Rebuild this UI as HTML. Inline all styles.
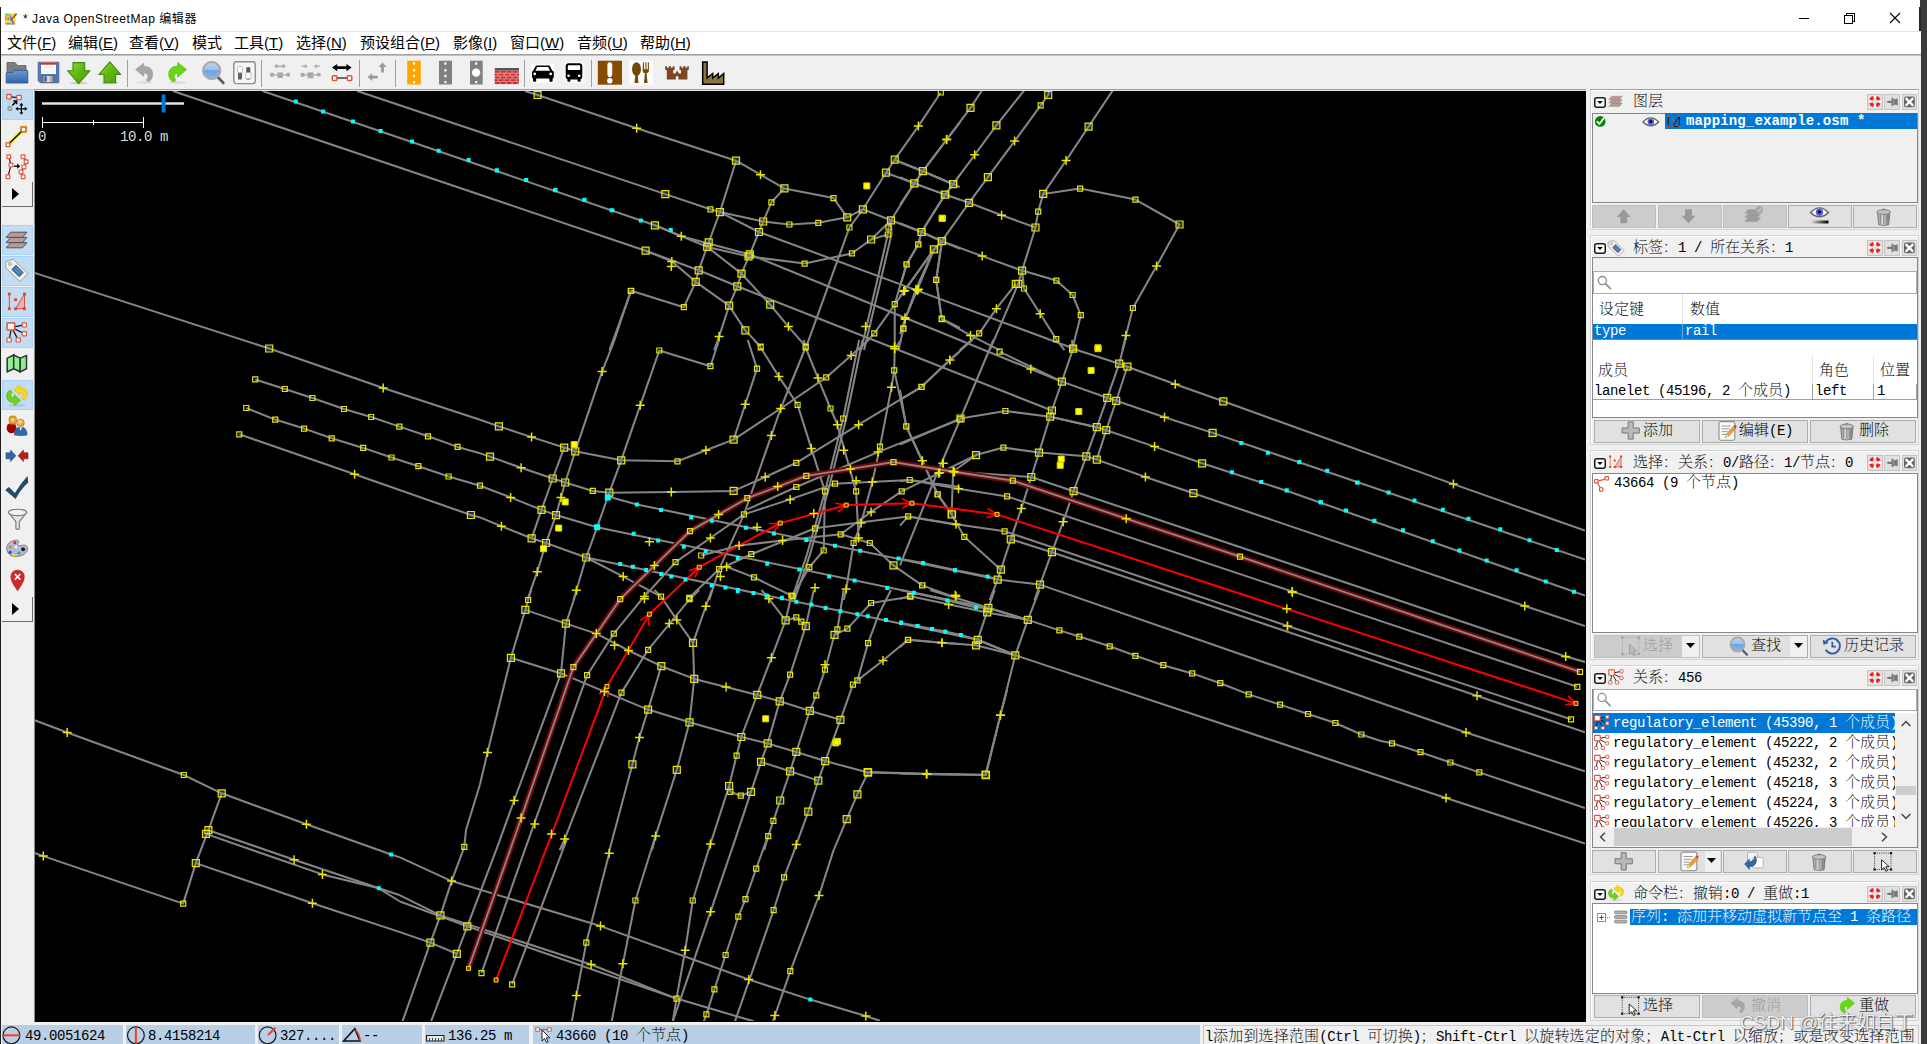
<!DOCTYPE html>
<html lang="zh"><head><meta charset="utf-8"><title>* Java OpenStreetMap 编辑器</title>
<style>
*{box-sizing:border-box;margin:0;padding:0}
html,body{width:1927px;height:1044px;overflow:hidden;background:#f0f0f0}
body{position:relative;font-family:"Liberation Sans","Noto Sans CJK SC",sans-serif;color:#000}
div,svg{position:absolute}
.t{white-space:nowrap}
.ui{font-family:"Liberation Sans","Noto Sans CJK SC",sans-serif}
.sw{font-family:"Liberation Mono","Noto Serif CJK SC",serif;font-size:15px;color:#000;font-weight:200}
.sw .a{font-family:"Liberation Mono",monospace;font-size:14px;letter-spacing:-0.4px}
.b .a{letter-spacing:0.15px}
.b,.b .a{font-weight:bold}
.btn{background:#e1e1e1;border:1px solid #adadad}
.btnd{background:#cccccc;border:1px solid #bfbfbf}
.lb{background:#fff;border:1px solid #828790}
.sel{background:#0078d7;color:#fff}
.sel .sw,.sel.sw{color:#fff}
.sf{background:#b8cfe5}
.tb{background:#f0f0f0;border:1px solid #adadad}
.lsel{background:#c2dcf3;border:1px solid #a8d2f7}
</style></head>
<body>
<div style="left:0px;top:0px;width:1921px;height:31px;background:#fff"></div>
<div style="left:0px;top:31px;width:1919px;height:1px;background:#e6e6e6"></div>
<div style="left:0px;top:32px;width:1921px;height:22px;background:#fff"></div>
<div style="left:0px;top:54px;width:1921px;height:1px;background:#a0a0a0"></div>
<div style="left:0px;top:55px;width:1921px;height:1px;background:#c2c2c2"></div>
<div style="left:0px;top:7px;width:1px;height:1037px;background:#1e1e1e"></div>
<div style="left:1921px;top:0px;width:6px;height:1044px;background:#3b3b3b"></div>
<div style="left:1920px;top:0px;width:1px;height:7px;background:#3b3b3b"></div>
<div style="left:1919px;top:7px;width:2px;height:24px;background:#262626"></div>
<div class="t ui" style="left:23px;top:9px;height:20px;line-height:20px;font-size:12px;letter-spacing:0.55px">* Java OpenStreetMap 编辑器</div>
<svg style="left:1790px;top:5px" width="120" height="26" viewBox="0 0 120 26"><g stroke="#000" stroke-width="1" fill="none" shape-rendering="crispEdges"><path d="M9 13.5H19"/><path d="M54.5 10.5h8v8h-8z"/><path d="M56.5 10.5v-2h8v8h-2"/></g><path d="M100 8L110 18M110 8L100 18" stroke="#000" stroke-width="1.1" fill="none"/></svg>
<div class="t ui" style="left:7px;top:32px;height:22px;line-height:22px;font-size:15px">文件(<u>F</u>)</div>
<div class="t ui" style="left:68px;top:32px;height:22px;line-height:22px;font-size:15px">编辑(<u>E</u>)</div>
<div class="t ui" style="left:129px;top:32px;height:22px;line-height:22px;font-size:15px">查看(<u>V</u>)</div>
<div class="t ui" style="left:192px;top:32px;height:22px;line-height:22px;font-size:15px">模式</div>
<div class="t ui" style="left:234px;top:32px;height:22px;line-height:22px;font-size:15px">工具(<u>T</u>)</div>
<div class="t ui" style="left:296px;top:32px;height:22px;line-height:22px;font-size:15px">选择(<u>N</u>)</div>
<div class="t ui" style="left:360px;top:32px;height:22px;line-height:22px;font-size:15px">预设组合(<u>P</u>)</div>
<div class="t ui" style="left:453px;top:32px;height:22px;line-height:22px;font-size:15px">影像(<u>I</u>)</div>
<div class="t ui" style="left:510px;top:32px;height:22px;line-height:22px;font-size:15px">窗口(<u>W</u>)</div>
<div class="t ui" style="left:577px;top:32px;height:22px;line-height:22px;font-size:15px">音频(<u>U</u>)</div>
<div class="t ui" style="left:640px;top:32px;height:22px;line-height:22px;font-size:15px">帮助(<u>H</u>)</div>
<div style="left:127px;top:60px;width:1px;height:27px;background:#a0a0a0"></div>
<div style="left:261px;top:60px;width:1px;height:27px;background:#a0a0a0"></div>
<div style="left:359px;top:60px;width:1px;height:27px;background:#a0a0a0"></div>
<div style="left:395px;top:60px;width:1px;height:27px;background:#a0a0a0"></div>
<div style="left:524px;top:60px;width:1px;height:27px;background:#a0a0a0"></div>
<div style="left:591px;top:60px;width:1px;height:27px;background:#a0a0a0"></div>
<div class="lsel" style="left:2px;top:89px;width:31px;height:31px;"></div>
<div class="lsel" style="left:2px;top:225px;width:31px;height:30px;"></div>
<div class="lsel" style="left:2px;top:256px;width:31px;height:30px;"></div>
<div class="lsel" style="left:2px;top:287px;width:31px;height:30px;"></div>
<div class="lsel" style="left:2px;top:318px;width:31px;height:30px;"></div>
<div class="lsel" style="left:2px;top:380px;width:31px;height:30px;"></div>
<div style="left:2px;top:182px;width:31px;height:25px;border-right:1px solid #696969;border-bottom:1px solid #696969;background:#f0f0f0"></div>
<svg style="left:11px;top:188px" width="10" height="12"><path d="M1 0L8 6L1 12z" fill="#000"/></svg>
<div style="left:2px;top:597px;width:31px;height:25px;border-right:1px solid #696969;border-bottom:1px solid #696969;background:#f0f0f0"></div>
<svg style="left:11px;top:603px" width="10" height="12"><path d="M1 0L8 6L1 12z" fill="#000"/></svg>
<div style="left:34px;top:89px;width:1552px;height:1px;background:#a0a0a0"></div>
<div style="left:34px;top:89px;width:1px;height:933px;background:#8c8c8c"></div>
<div style="left:35px;top:90px;width:1551px;height:1px;background:#e3e3e3"></div>
<div style="left:35px;top:91px;width:1551px;height:931px;background:#000"></div>
<div class="sf" style="left:2px;top:1025px;width:121px;height:20px;"></div>
<div class="sf" style="left:126px;top:1025px;width:129px;height:20px;"></div>
<div class="sf" style="left:258px;top:1025px;width:81px;height:20px;"></div>
<div class="sf" style="left:342px;top:1025px;width:80px;height:20px;"></div>
<div class="sf" style="left:425px;top:1025px;width:104px;height:20px;"></div>
<div class="sf" style="left:533px;top:1025px;width:667px;height:20px;"></div>
<div class="sf" style="left:1203px;top:1025px;width:716px;height:20px;"></div>
<div style="left:1203px;top:1025px;width:716px;height:20px;background:#f0f0f0;border:1px solid #c8c8c8"></div>
<div class="t sw" style="left:25px;top:1026px;height:20px;line-height:20px;"><span class="a">49.0051624</span></div>
<div class="t sw" style="left:148px;top:1026px;height:20px;line-height:20px;"><span class="a">8.4158214</span></div>
<div class="t sw" style="left:280px;top:1026px;height:20px;line-height:20px;"><span class="a">327....</span></div>
<div class="t sw" style="left:363px;top:1026px;height:20px;line-height:20px;"><span class="a">--</span></div>
<div class="t sw" style="left:448px;top:1026px;height:20px;line-height:20px;"><span class="a">136.25&nbsp;m</span></div>
<div class="t sw" style="left:556px;top:1026px;height:20px;line-height:20px;"><span class="a">43660&nbsp;(10&nbsp;</span>个节点<span class="a">)</span></div>
<div class="t sw" style="left:1205px;top:1027px;height:20px;line-height:20px;letter-spacing:0.18px"><span class="a">l</span>添加到选择范围<span class="a">(Ctrl&nbsp;</span>可切换<span class="a">)</span>；<span class="a">Shift-Ctrl&nbsp;</span>以旋转选定的对象；<span class="a">Alt-Ctrl&nbsp;</span>以缩放；或是改变选择范围</div>
<div style="left:1590px;top:89px;width:329px;height:141px;border:1px solid #d5d5d5;border-top-color:#a0a0a0;box-shadow:inset 1px 1px 0 #fff"></div>
<svg style="left:1594px;top:97px" width="12" height="11"><rect x="0.75" y="0.75" width="10.5" height="9.5" rx="2" fill="#fff" stroke="#1a1a1a" stroke-width="1.5"/><path d="M3.2 4L8.8 4L6 7z" fill="#000"/></svg>
<div class="t sw" style="left:1633px;top:93px;height:20px;line-height:20px;">图层</div>
<div style="left:1867.4px;top:94.2px;width:15.5px;height:15.6px;background:#e1e1e1;border:1px solid #c4c4c4"></div>
<div style="left:1884.3px;top:94.2px;width:15.5px;height:15.6px;background:#e1e1e1;border:1px solid #c4c4c4"></div>
<div style="left:1901.6px;top:94.2px;width:15.5px;height:15.6px;background:#e1e1e1;border:1px solid #c4c4c4"></div>
<div style="left:1590px;top:235px;width:329px;height:210px;border:1px solid #d5d5d5;border-top-color:#d5d5d5;box-shadow:inset 1px 1px 0 #fff"></div>
<svg style="left:1594px;top:243px" width="12" height="11"><rect x="0.75" y="0.75" width="10.5" height="9.5" rx="2" fill="#fff" stroke="#1a1a1a" stroke-width="1.5"/><path d="M3.2 4L8.8 4L6 7z" fill="#000"/></svg>
<div class="t sw" style="left:1633px;top:238px;height:20px;line-height:20px;">标签：<span class="a">1&nbsp;/&nbsp;</span>所在关系：<span class="a">1</span></div>
<div style="left:1867.4px;top:240.2px;width:15.5px;height:15.6px;background:#e1e1e1;border:1px solid #c4c4c4"></div>
<div style="left:1884.3px;top:240.2px;width:15.5px;height:15.6px;background:#e1e1e1;border:1px solid #c4c4c4"></div>
<div style="left:1901.6px;top:240.2px;width:15.5px;height:15.6px;background:#e1e1e1;border:1px solid #c4c4c4"></div>
<div style="left:1590px;top:450px;width:329px;height:210px;border:1px solid #d5d5d5;border-top-color:#d5d5d5;box-shadow:inset 1px 1px 0 #fff"></div>
<svg style="left:1594px;top:458px" width="12" height="11"><rect x="0.75" y="0.75" width="10.5" height="9.5" rx="2" fill="#fff" stroke="#1a1a1a" stroke-width="1.5"/><path d="M3.2 4L8.8 4L6 7z" fill="#000"/></svg>
<div class="t sw" style="left:1633px;top:453px;height:20px;line-height:20px;">选择：关系：<span class="a">0/</span>路径：<span class="a">1/</span>节点：<span class="a">0</span></div>
<div style="left:1867.4px;top:455.2px;width:15.5px;height:15.6px;background:#e1e1e1;border:1px solid #c4c4c4"></div>
<div style="left:1884.3px;top:455.2px;width:15.5px;height:15.6px;background:#e1e1e1;border:1px solid #c4c4c4"></div>
<div style="left:1901.6px;top:455.2px;width:15.5px;height:15.6px;background:#e1e1e1;border:1px solid #c4c4c4"></div>
<div style="left:1590px;top:665px;width:329px;height:210px;border:1px solid #d5d5d5;border-top-color:#d5d5d5;box-shadow:inset 1px 1px 0 #fff"></div>
<svg style="left:1594px;top:673px" width="12" height="11"><rect x="0.75" y="0.75" width="10.5" height="9.5" rx="2" fill="#fff" stroke="#1a1a1a" stroke-width="1.5"/><path d="M3.2 4L8.8 4L6 7z" fill="#000"/></svg>
<div class="t sw" style="left:1633px;top:668px;height:20px;line-height:20px;">关系：<span class="a">456</span></div>
<div style="left:1867.4px;top:670.2px;width:15.5px;height:15.6px;background:#e1e1e1;border:1px solid #c4c4c4"></div>
<div style="left:1884.3px;top:670.2px;width:15.5px;height:15.6px;background:#e1e1e1;border:1px solid #c4c4c4"></div>
<div style="left:1901.6px;top:670.2px;width:15.5px;height:15.6px;background:#e1e1e1;border:1px solid #c4c4c4"></div>
<div style="left:1590px;top:881px;width:329px;height:140px;border:1px solid #d5d5d5;border-top-color:#d5d5d5;box-shadow:inset 1px 1px 0 #fff"></div>
<svg style="left:1594px;top:889px" width="12" height="11"><rect x="0.75" y="0.75" width="10.5" height="9.5" rx="2" fill="#fff" stroke="#1a1a1a" stroke-width="1.5"/><path d="M3.2 4L8.8 4L6 7z" fill="#000"/></svg>
<div class="t sw" style="left:1633px;top:884px;height:20px;line-height:20px;">命令栏：撤销<span class="a">:0&nbsp;/&nbsp;</span>重做<span class="a">:1</span></div>
<div style="left:1867.4px;top:886.2px;width:15.5px;height:15.6px;background:#e1e1e1;border:1px solid #c4c4c4"></div>
<div style="left:1884.3px;top:886.2px;width:15.5px;height:15.6px;background:#e1e1e1;border:1px solid #c4c4c4"></div>
<div style="left:1901.6px;top:886.2px;width:15.5px;height:15.6px;background:#e1e1e1;border:1px solid #c4c4c4"></div>
<div style="left:1592px;top:113px;width:326px;height:90px;background:#f0f0f0;border:1px solid #828790"></div>
<div class="sel" style="left:1665px;top:113px;width:252px;height:16px;"></div>
<div class="t sw b" style="left:1686px;top:111px;height:20px;line-height:20px;color:#fff"><span class="a">mapping_example.osm&nbsp;*</span></div>
<div class="btnd" style="left:1592px;top:205px;width:64px;height:23px;"></div>
<div class="btnd" style="left:1658px;top:205px;width:64px;height:23px;"></div>
<div class="btnd" style="left:1723px;top:205px;width:64px;height:23px;"></div>
<div class="btn" style="left:1788px;top:205px;width:64px;height:23px;"></div>
<div class="btn" style="left:1853px;top:205px;width:64px;height:23px;"></div>
<div style="left:1592px;top:257px;width:326px;height:161px;background:#fff;border:1px solid #828790"></div>
<div style="left:1593px;top:258px;width:324px;height:13px;background:#f0f0f0"></div>
<div style="left:1593px;top:271px;width:324px;height:23px;background:#fff;border:1px solid #abadb3"></div>
<div style="left:1593px;top:294px;width:324px;height:30px;background:#fff"></div>
<div style="left:1682px;top:294px;width:1px;height:30px;background:#e5e5e5"></div>
<div class="t sw" style="left:1599px;top:300px;height:22px;line-height:22px;">设定键</div>
<div class="t sw" style="left:1690px;top:300px;height:22px;line-height:22px;">数值</div>
<div class="sel" style="left:1593px;top:324px;width:324px;height:15px;"></div>
<div style="left:1682px;top:324px;width:1px;height:15px;background:#5aa7e6"></div>
<div style="left:1593px;top:339px;width:324px;height:1px;background:#858585"></div>
<div class="t sw" style="left:1594px;top:321px;height:20px;line-height:20px;color:#fff"><span class="a">type</span></div>
<div class="t sw" style="left:1685px;top:321px;height:20px;line-height:20px;color:#fff"><span class="a">rail</span></div>
<div style="left:1812px;top:356px;width:1px;height:28px;background:#e5e5e5"></div>
<div style="left:1873px;top:356px;width:1px;height:28px;background:#e5e5e5"></div>
<div class="t sw" style="left:1598px;top:361px;height:22px;line-height:22px;">成员</div>
<div class="t sw" style="left:1819px;top:361px;height:22px;line-height:22px;">角色</div>
<div class="t sw" style="left:1880px;top:361px;height:22px;line-height:22px;">位置</div>
<div style="left:1593px;top:399px;width:324px;height:1px;background:#a0a0a0"></div>
<div style="left:1812px;top:384px;width:1px;height:16px;background:#a0a0a0"></div>
<div style="left:1873px;top:384px;width:1px;height:16px;background:#a0a0a0"></div>
<div style="left:1916px;top:384px;width:1px;height:16px;background:#a0a0a0"></div>
<div class="t sw" style="left:1594px;top:381px;height:20px;line-height:20px;"><span class="a">lanelet&nbsp;(45196,&nbsp;2&nbsp;</span>个成员<span class="a">)</span></div>
<div class="t sw" style="left:1815px;top:381px;height:20px;line-height:20px;"><span class="a">left</span></div>
<div class="t sw" style="left:1877px;top:381px;height:20px;line-height:20px;"><span class="a">1</span></div>
<div class="btn" style="left:1594px;top:420px;width:106px;height:23px;"></div>
<div class="t sw" style="left:1643px;top:421px;height:21px;line-height:21px;">添加</div>
<div class="btn" style="left:1702px;top:420px;width:106px;height:23px;"></div>
<div class="t sw" style="left:1739px;top:421px;height:21px;line-height:21px;">编辑<span class="a">(E)</span></div>
<div class="btn" style="left:1810px;top:420px;width:106px;height:23px;"></div>
<div class="t sw" style="left:1859px;top:421px;height:21px;line-height:21px;">删除</div>
<div style="left:1592px;top:473px;width:326px;height:160px;background:#fff;border:1px solid #828790"></div>
<div class="t sw" style="left:1614px;top:473px;height:20px;line-height:20px;"><span class="a">43664&nbsp;(9&nbsp;</span>个节点<span class="a">)</span></div>
<div class="btnd" style="left:1594px;top:635px;width:106px;height:23px;"></div>
<div style="left:1682px;top:636px;width:17px;height:21px;background:#f0f0f0"></div>
<div class="btn" style="left:1702px;top:635px;width:106px;height:23px;"></div>
<div style="left:1790px;top:636px;width:17px;height:21px;background:#f0f0f0"></div>
<div class="btn" style="left:1810px;top:635px;width:106px;height:23px;"></div>
<div class="t sw" style="left:1643px;top:636px;height:21px;line-height:21px;color:#9a9a9a">选择</div>
<div class="t sw" style="left:1751px;top:636px;height:21px;line-height:21px;">查找</div>
<div class="t sw" style="left:1844px;top:636px;height:21px;line-height:21px;">历史记录</div>
<svg style="left:1686px;top:643px" width="9" height="6"><path d="M0 0H9L4.5 5z" fill="#000"/></svg>
<svg style="left:1794px;top:643px" width="9" height="6"><path d="M0 0H9L4.5 5z" fill="#000"/></svg>
<div style="left:1592px;top:689px;width:326px;height:159px;background:#fff;border:1px solid #828790"></div>
<div style="left:1593px;top:689px;width:324px;height:22px;background:#fff;border:1px solid #abadb3"></div>
<div class="sel" style="left:1593px;top:713px;width:302px;height:20px;"></div>
<div style="left:1593px;top:713px;width:302px;height:114px;overflow:hidden">
<div class="t sw" style="left:20px;top:0px;height:20px;line-height:20px;color:#fff;"><span class="a">regulatory_element&nbsp;(45390,&nbsp;1&nbsp;</span>个成员<span class="a">)</span></div>
<div class="t sw" style="left:20px;top:20px;height:20px;line-height:20px;"><span class="a">regulatory_element&nbsp;(45222,&nbsp;2&nbsp;</span>个成员<span class="a">)</span></div>
<div class="t sw" style="left:20px;top:40px;height:20px;line-height:20px;"><span class="a">regulatory_element&nbsp;(45232,&nbsp;2&nbsp;</span>个成员<span class="a">)</span></div>
<div class="t sw" style="left:20px;top:60px;height:20px;line-height:20px;"><span class="a">regulatory_element&nbsp;(45218,&nbsp;3&nbsp;</span>个成员<span class="a">)</span></div>
<div class="t sw" style="left:20px;top:80px;height:20px;line-height:20px;"><span class="a">regulatory_element&nbsp;(45224,&nbsp;3&nbsp;</span>个成员<span class="a">)</span></div>
<div class="t sw" style="left:20px;top:100px;height:20px;line-height:20px;"><span class="a">regulatory_element&nbsp;(45226,&nbsp;3&nbsp;</span>个成员<span class="a">)</span></div>
</div>
<div style="left:1895px;top:713px;width:22px;height:114px;background:#f0f0f0"></div>
<div style="left:1896px;top:786px;width:20px;height:9px;background:#cdcdcd"></div>
<svg style="left:1901px;top:720px" width="10" height="7"><path d="M0.7 6L5 1.5L9.3 6" fill="none" stroke="#404040" stroke-width="1.4"/></svg>
<svg style="left:1901px;top:813px" width="10" height="7"><path d="M0.7 1L5 5.5L9.3 1" fill="none" stroke="#404040" stroke-width="1.4"/></svg>
<div style="left:1593px;top:827px;width:324px;height:20px;background:#f0f0f0"></div>
<div style="left:1614px;top:828px;width:238px;height:18px;background:#cdcdcd"></div>
<svg style="left:1599px;top:832px" width="7" height="10"><path d="M6 0.7L1.5 5L6 9.3" fill="none" stroke="#404040" stroke-width="1.4"/></svg>
<svg style="left:1881px;top:832px" width="7" height="10"><path d="M1 0.7L5.5 5L1 9.3" fill="none" stroke="#404040" stroke-width="1.4"/></svg>
<div class="btn" style="left:1592px;top:850px;width:64px;height:23px;"></div>
<div class="btn" style="left:1658px;top:850px;width:64px;height:23px;"></div>
<div class="btn" style="left:1723px;top:850px;width:64px;height:23px;"></div>
<div class="btn" style="left:1788px;top:850px;width:64px;height:23px;"></div>
<div class="btn" style="left:1853px;top:850px;width:64px;height:23px;"></div>
<div style="left:1705px;top:851px;width:15px;height:21px;background:#f0f0f0"></div>
<svg style="left:1707px;top:858px" width="9" height="6"><path d="M0 0H9L4.5 5z" fill="#000"/></svg>
<div style="left:1592px;top:903px;width:326px;height:91px;background:#fff;border:1px solid #828790"></div>
<div class="sel" style="left:1630px;top:909px;width:287px;height:16px;"></div>
<div class="t sw" style="left:1631px;top:907px;height:20px;line-height:20px;color:#fff">序列<span class="a">:&nbsp;</span>添加并移动虚拟新节点至<span class="a">&nbsp;1&nbsp;</span>条路径</div>
<div class="btn" style="left:1594px;top:995px;width:106px;height:23px;"></div>
<div class="t sw" style="left:1643px;top:996px;height:21px;line-height:21px;">选择</div>
<div class="btnd" style="left:1702px;top:995px;width:106px;height:23px;"></div>
<div class="t sw" style="left:1751px;top:996px;height:21px;line-height:21px;color:#9a9a9a">撤消</div>
<div class="btn" style="left:1810px;top:995px;width:106px;height:23px;"></div>
<div class="t sw" style="left:1859px;top:996px;height:21px;line-height:21px;">重做</div>
<svg style="left:35px;top:91px" width="1550" height="930" viewBox="35 91 1550 930">
<g fill="none" stroke="#858585" stroke-width="2.05" stroke-linejoin="round">
<path d="M172.9 91L645.6 250.7"/>
<path d="M262.6 91L654.9 225.3"/>
<path d="M357.2 91L665.3 194.1"/>
<path d="M525 91L537.6 95L636.7 128.2L736 160.7"/>
<path d="M34 272.7L269.2 348.5L383.2 388L480 419.7"/>
<path d="M255.2 379.4L284.8 389L312.4 398L344 409L371.2 417L399.4 426.6L428 436.3L457.6 446.9L480 453.3"/>
<path d="M246.3 408L275.2 419.6L304.1 428.6L331.7 438.3L363.2 447.9L391.5 457.5L418.4 466.2L448.6 476.5L480 485.7"/>
<path d="M239.3 434.3L354.6 474.2L470.9 515L480 517.4"/>
<path d="M630.7 291L614.5 340"/>
<path d="M34 719.9L67.2 732.5L183.8 775L221.7 793.3L306.4 824.2L391.1 854.5L400 857.4"/>
<path d="M221.7 793.3L208.4 830.2L195.8 863.1L183.2 903.6L43.3 856.1L34 852.8"/>
<path d="M208.4 830.2L294.1 859.8L400 895.3"/>
<path d="M206 833.9L322.4 874.4L378.8 888.3L400 901.5"/>
<path d="M195.8 863.1L312.4 903.3L400 932.1"/>
<path d="M1223.3 401.3L1453.4 484.1L1585 530.6"/>
<path d="M1212.6 432.9L1585 559.5"/>
<path d="M1202.2 463.3L1286.6 490.8L1585 595.6"/>
<path d="M1193.4 493.2L1524.8 606L1585 626"/>
<path d="M1073.6 491.2L1565.7 656.5L1585 661.9"/>
<path d="M1007.1 496.4L1292 591.4L1577.3 686.8"/>
<path d="M1004.6 531.3L1287.6 626L1571 719.3"/>
<path d="M1051.9 552.2L1585 732.3"/>
<path d="M1040 584.6L1466 732.5L1585 771.4"/>
<path d="M1015.3 655.3L1446 798L1585 843.5"/>
<path d="M736.1 160.7L760.5 174.7L784.4 188.4L833.5 198.1L847.2 217.3L862.9 209.3"/>
<path d="M736.1 160.7L719.9 212.1L708.7 242.4L698.7 270.3L695.7 281.8L683.8 307.2L631.2 290.8L609.5 350.1"/>
<path d="M665.3 194.1L710.4 209.3L719.9 212.1L763.2 221.5L789.4 224.5L818.3 222.8L847.2 217.3"/>
<path d="M719.9 212.1L759 232"/>
<path d="M759 232L917.4 290.6L1072.9 348.2"/>
<path d="M654.9 225.3L707.2 246.9L748.5 256.4L804.6 263.6L851.9 253.4L871.1 239.5L891 220.3"/>
<path d="M654.9 225.3L681.3 236.2L749.8 254.4"/>
<path d="M749.8 254.4L905 317.7L1030.8 369L1062 381.7"/>
<path d="M645.6 250.7L698.7 270.3L737.3 286.3"/>
<path d="M737.3 286.3L1051.9 410.5"/>
<path d="M645.6 250.7L671.8 261.4L695.7 281.8"/>
<path d="M695.7 281.8L729.1 305.7L745.3 330.4L760.7 346.6"/>
<path d="M707.2 246.9L741.5 273.6L770.2 304.7L788.4 326.6L805.8 346.6"/>
<path d="M784.4 188.4L771.4 202.3L763.2 221.5L759 232L749.8 254.4L741.5 273.6L737.3 286.3L729.1 305.7L719.1 336.6L714.1 350.1"/>
<path d="M940.8 92.5L918.4 126.1L894.7 159.7L886 172.7L862.9 209.3L849.4 227.5L806.3 346.6"/>
<path d="M960 122.4L946.5 139.8L922.9 171.2L914.2 183.4L891 220.3L888.5 227.5L887.8 234.5L861.1 350.1"/>
<path d="M960 174.7L953.3 184.2L945.3 194.6L921.4 232L918.4 244.4L906.4 264.4L894.7 304.2L894.7 346.6"/>
<path d="M894.7 159.7L922.9 171.2L953.3 184.2L960 187.1"/>
<path d="M886 172.7L914.2 183.4L945.3 194.6L960 199.6"/>
<path d="M862.9 209.3L891 220.3L921.4 232L942.1 241.2L960 248.7"/>
<path d="M942.1 241.2L933.8 249.4L904.7 290.5L874.3 333.4L858.6 350.1"/>
<path d="M942.1 241.2L936.3 279.8L941.6 318.7L960 327.9"/>
<path d="M933.8 249.4L915.9 289.3L905.2 319.2L903.5 328.6L898.5 350.1"/>
<path d="M871.1 239.5L887.8 234.5"/>
<path d="M891 220.3L891.5 234.5L864.1 350.1"/>
<path d="M982.2 90L970.5 107.9L946.8 139.3L922.9 171.2L914.4 183.4L900 204.6"/>
<path d="M1024.5 90L996.4 125.4L974.7 154.8L953.1 184.2L944.8 194.6L921.7 232L918.2 244.4L906.7 264.4L900 286.8"/>
<path d="M1049.5 90L1048.2 95L1040.7 105.4L1014.6 141.1L987.9 177.2L969 202.8L941.8 241.2L934.1 249.4L900 296.7"/>
<path d="M1113 90L1088.6 126.6L1066.1 160.5L1043.2 193.9L1038.2 211.6L1035.5 227.5L1022.1 270.6L1024 288.5L1040.2 313.7L1056.2 339.1L1064.4 350.1"/>
<path d="M1043.2 193.9L1080.1 188.6L1135.4 199.6L1179.5 224.5L1156.6 266.1L1132.9 308L1125.9 335.4L1122.4 350.1"/>
<path d="M900 162.2L922.9 171.2L953.1 184.2"/>
<path d="M900 177.2L914.4 183.4L944.8 194.6L969 202.8L1001.6 215.3L1035.5 227.5"/>
<path d="M900 223.3L921.7 232L941.8 241.2L982.2 256.1L1022.1 270.6L1056.4 280.6L1072.6 295L1080.8 315.2L1072.6 347.8"/>
<path d="M1015.8 283.8L996.4 308.7L979.2 333.4L959.8 350.1"/>
<path d="M1022.1 270.6L1018.3 283.8L989.7 350.1"/>
<path d="M941.8 241.2L936.1 279.8L941.8 319.2L970.5 335.4L999.6 350.1"/>
<path d="M934.1 249.4L905 319.2L900 334.1"/>
<path d="M480 419.7L498.9 426.4L531.6 437.1L564.2 447.6L575.2 451.3L621.2 460.3L677.5 461.3L705.9 450.3L733.6 439.6L780.7 408.5L826.2 377.4L851.1 355.4L868.6 340"/>
<path d="M480 453.3L490 456.6L521.1 467.8L552.7 478.5L565.2 482.5L592.8 490.9L609.3 492.7L671.3 491.9L733.6 490.9L765.2 477L796.3 462.8L858.6 424.7L921.4 386.8L950 359.9L960 351.2"/>
<path d="M480 485.7L510.6 497.4L541.5 509.9L556 515.1L597.1 527.3"/>
<path d="M597.1 527.3L988.4 607.9L1027.8 619.9"/>
<path d="M480 517.4L501.4 526.3L531.6 538.3L546 543L586.1 557.5"/>
<path d="M586.1 557.5L977.7 639.8L1015.3 655.3"/>
<path d="M586.1 557.5L623.2 576.6L661.1 596.6"/>
<path d="M609.3 492.7L607.8 497.4"/>
<path d="M608 496.5L636.9 504.4L997.6 579.6"/>
<path d="M564.2 447.6L552.7 478.5L541.5 509.9L531.6 538.3"/>
<path d="M614.5 340L602.1 371.6L575.2 451.3L565.2 482.5L556 515.1L546 543L537.3 571.7L527.3 600.1"/>
<path d="M573.4 600.1L576.4 590.3L586.1 557.5L597.1 527.3L609.3 492.7L621.2 460.3L640.2 405.3L659.3 350.5L710.4 366.2L719.1 340"/>
<path d="M747.8 340L757 368.6L745.3 404.3L733.6 439.6"/>
<path d="M754 340L760.7 347.5L778.9 376.6L797.6 404.8L811.3 448.4L825 491.4L823.7 550.5L809.3 567.2L792.6 596.1"/>
<path d="M803.8 340L805.6 347.5L818 378.1L830.5 408.5L837.4 424.7L856.1 491.4L858.6 538L853.6 543L846.2 589.1L843.7 600.1"/>
<path d="M805.6 347.5L780.7 408.5L771.4 435.4L744 514.4L719.1 569.2L709.2 600.1"/>
<path d="M859.1 340L843.2 418.5L825 491.4L806.3 556.7L791.4 600.1"/>
<path d="M862.6 340L846.2 418.5L828 491.4L809.3 556.7L794.4 600.1"/>
<path d="M901 340L894.7 348.7L894.2 370.4L891.5 387.3L880 446.6L872.3 482L861.1 523.1L853.6 543"/>
<path d="M894.2 370.4L906.4 426.4L922.1 460.8L937.8 494.4L952 514.4"/>
<path d="M644.4 596.6L675.5 562.2L710.4 538L744 514.4L790.1 499.4L835 483.7L909.7 480L960 487"/>
<path d="M689.2 597.8L719.1 569.2L751.3 554.2L815 528.3L861.6 522.3L908.2 516.4L960 525.6"/>
<path d="M782.6 540.5L840.7 534.3L869.8 543L893.5 565.4L922.1 585.4L960 599.1"/>
<path d="M726.6 566.7L754 577.4L792.6 596.1"/>
<path d="M701.2 555.5L739.1 545.5L782.6 540.5"/>
<path d="M960 419.2L878 452.1L796.3 487L747.3 509.4"/>
<path d="M840.7 534.3L871 511.9L901.7 491.3L976.3 455"/>
<path d="M1073.1 348.7L1119.2 363.7L1127.4 366.7L1175.2 384.3L1223.3 401.3"/>
<path d="M1061.9 381.6L1107.2 397.8L1116.2 400.8L1164.5 417.2L1212.6 432.9"/>
<path d="M1051.9 410.5L1050.2 416.7L1096.8 427.2L1106.2 430.2L1154.6 446.6L1202.1 463.3"/>
<path d="M976 455.1L1003.4 447.6L1039 452.6L1086.3 456.3L1096.8 459.6L1145.4 477L1193.4 493.2"/>
<path d="M952.3 471.5L1031.3 477L1073.6 491.2"/>
<path d="M900 481.2L909.5 480L958.5 488.7L1007.1 496.4"/>
<path d="M900 525.6L908.2 516.4L956 524.3L1004.6 531.3"/>
<path d="M1010.8 539.3L1051.9 552.2"/>
<path d="M900 558.7L923.2 562.9L955 569.9L987.7 576.6L997.6 579.6L1040 584.6"/>
<path d="M993.4 340L960.5 418.5L932.4 484.5L900 565.4"/>
<path d="M1071.9 340L1073.1 348.7L1061.9 381.6L1051.9 410.5L1039 452.6L1031.3 477L1021.3 508.6L1010.8 539.3L1000.9 569.7L997.6 579.6L989.7 600.1"/>
<path d="M1125.4 340L1119.2 363.7L1107.2 397.8L1096.8 427.2L1086.3 456.3L1073.6 491.2L1063.2 521.8L1051.9 552.2L1040 584.6L1034.5 600.1"/>
<path d="M1127.4 366.7L1116.2 400.8L1106.2 430.2L1096.8 459.6"/>
<path d="M900 389.8L906.2 426.4L922.4 460.8L937.4 494.4L951.6 514.4L964.3 536.8L1000.9 569.7"/>
<path d="M972.2 340L949.8 359.9L921.7 386.8L900 399.8"/>
<path d="M999.6 351.7L1061.9 381.6"/>
<path d="M900 444.6L960.5 418.5L1005.4 411L1050.2 416.7L1096.8 427.2"/>
<path d="M976 455.1L953.1 471.5L951.6 514.4"/>
<path d="M531.1 590L525.3 609.9L510.9 657.8L487.5 752.4L480 784.3"/>
<path d="M525.3 609.9L565.9 623.6L596.3 633.6L628.5 650.5L661.3 666.2L694.2 678.9L726.1 687.1L757.2 694.9L779.7 701.3L809.8 710.8L840.4 719.8"/>
<path d="M510.9 657.8L561 673.4L604.5 691.6L648.1 709.6L689.5 722.3L741.3 737L767.7 743.4L796.3 751.9L825.2 761.1L868.1 772.6L926.6 774.1L960 774.6"/>
<path d="M577.1 590L565.9 623.6L561 673.4L514.1 800.5L496.2 850.1"/>
<path d="M649.4 590L613.8 633.6L587.1 675.2L524.8 850.1"/>
<path d="M699.2 590L689.7 599.2L648.1 649.8L621.5 692.6L564.7 839.1L559.7 850.1"/>
<path d="M654.4 590L661.1 596.7L676.8 619.9L693 642.8L694.2 678.9L689.5 722.3L676.8 769.8L655.6 835.9L651.9 850.1"/>
<path d="M711.7 590L705.9 606.2L693 642.8"/>
<path d="M661.3 666.2L648.1 709.6L639.4 737.5L632.4 764.4L609.5 850.1"/>
<path d="M761.5 590L768.9 598.7L785.6 620.4L771.4 657.8L757.2 694.9L741.3 737L736.6 755.6L729.1 786L710.4 844.1L708.7 850.1"/>
<path d="M791.4 595.5L785.6 620.4L796.3 617.4L801.3 621.6L805.8 626.1"/>
<path d="M813.8 590L805.8 626.1L790.1 674.7L779.7 701.3L767.7 743.4L761 761.9L751 791.8L731.6 850.1"/>
<path d="M843.7 590L837.4 629.4L834.5 634.8L825 669.7L816.3 695.4L809.8 710.8L796.3 751.9L790.1 771.3L780.2 800.5L773.4 820.9L768.2 836.1L764 850.1"/>
<path d="M891 590L878.5 614.9L868.1 643.1L857.4 680.4L852.9 684.7L840.4 719.8L825.2 761.1L818.3 780.6L808.3 811.7L796.3 844.6L794.4 850.1"/>
<path d="M910.4 596.7L871.1 603L847.4 628.6L834.5 634.8"/>
<path d="M868.1 772.6L857.4 794.3L846.7 819.2L833.7 850.1"/>
<path d="M761 761.9L790.1 771.3L818.3 780.6"/>
<path d="M729.1 786L730.3 791.8L740.8 795.7L751 791.8"/>
<path d="M857.4 680.4L883 660.5L907.9 639.8L942.1 642.8L960 644.1"/>
<path d="M1027.8 619.9L1059.4 630.4L1079.3 636.6L1109.7 646.3L1135.4 655.8L1163.3 665.2L1192.2 673.4L1220.3 683.2L1248.7 694.4L1280.1 704.6L1308 714L1335.4 723L1361.3 734.5L1380 740.7"/>
<path d="M1380 740.7L1392 743.3L1420.5 752.2L1450.4 762.5L1479.3 772.4L1585 808"/>
<path d="M1039.5 590L1027.8 619.9L1015.3 655.3L1000.4 715.3L985.9 775.1L926.9 774.3L900 773.6"/>
<path d="M994.7 590L988.4 607.9L977.7 639.8L976 645.3"/>
<path d="M929.9 590L1027.8 619.9"/>
<path d="M900 598.7L910.5 596.2L987.2 612.4L1027.8 619.9"/>
<path d="M900 590L913.7 593L947.3 600.5L976 607.4L988.4 607.9"/>
<path d="M900 622.4L901.2 622.9L917.4 626.1L931.9 629.1L945.3 631.6L961 635.1L977.7 639.8L1015.3 655.3"/>
<path d="M900 647.3L908.2 639.8L941.8 642.8L976 645.3L1015.3 655.3"/>
<path d="M400 857.4L451.6 881.1L600.5 926.1L748.7 979.5L810.3 999.6L865.8 1016.1L880 1020.8"/>
<path d="M400 895.3L440.4 915.4L591.1 964.5L676.5 998.6L753.7 1021.3"/>
<path d="M400 901.5L467.3 926.4L676.5 998.6"/>
<path d="M400 932.1L430.4 942.6L456.8 953.8"/>
<path d="M464 849.9L464.3 846.9L451.6 881.1L440.4 915.4L430.4 942.6L402.5 1021.3"/>
<path d="M496.2 849.9L467.3 926.4L456.8 953.8L431.1 1021.3"/>
<path d="M524.8 849.9L481.5 973.2"/>
<path d="M559.7 849.9L566.9 839.2L512.1 984.4"/>
<path d="M609.5 849.9L609.2 853.2L586.3 942.6L576.4 995.6L571.9 1021.3"/>
<path d="M651.9 849.9L655.8 835L635.4 900.5L622.9 963.8L611.7 1021.3"/>
<path d="M708.7 849.9L710.6 843.2L692.7 900.5L685.2 950.3L676.5 998.6L672.8 1021.3"/>
<path d="M764 849.9L768.2 835.5L756.2 868.6L745.5 899.2L738.3 916.7L725.6 955L714.4 989.4L706.4 1014.3L703.9 1021.3"/>
<path d="M731.6 849.9L710.6 911.7L672.8 1021.3"/>
<path d="M794.4 849.9L796.6 844.4L784.1 877.3L773.6 910.2L735 1021.3"/>
<path d="M833.7 849.9L819 895.5L790.3 971.2L774.9 1015.6L772.9 1021.3"/>
<path d="M867.6 772L926.4 773.7L985.5 774.7L1000.5 715L1007 690"/>
<path d="M480 784.3L466 830L464.3 846.9"/>
</g>
<path d="M468.5 968.4L517.1 830L573.4 667.2L620.2 599.2L690 531.1L747.3 498.2L806.3 475.8L893.5 462.1L952.3 471.5L1012.8 480.7L1240 556.7L1580 671.8" fill="none" stroke="#700a0a" stroke-width="5.6" stroke-linejoin="round"/>
<path d="M468.5 968.4L517.1 830L573.4 667.2L620.2 599.2L690 531.1L747.3 498.2L806.3 475.8L893.5 462.1L952.3 471.5L1012.8 480.7L1240 556.7L1580 671.8" fill="none" stroke="#8f8585" stroke-width="1.8" stroke-linejoin="round"/>
<path d="M496.1 980L552.4 832.5L607 686.4L649.4 614.2L699.2 567.2L780.2 523.1L846.2 505.1L912 503.2L997.1 514.4L1576 703.4" fill="none" stroke="#ff0000" stroke-width="2" stroke-linejoin="round"/>
<path d="M607 686.4L607.9 697.4" stroke="#ff0000" stroke-width="1.6" fill="none"/>
<path d="M607 686.4L599.2 694.1" stroke="#ff0000" stroke-width="1.6" fill="none"/>
<path d="M649.4 614.2L648.4 625.2" stroke="#ff0000" stroke-width="1.6" fill="none"/>
<path d="M649.4 614.2L640.3 620.4" stroke="#ff0000" stroke-width="1.6" fill="none"/>
<path d="M699.2 567.2L695.1 577.4" stroke="#ff0000" stroke-width="1.6" fill="none"/>
<path d="M699.2 567.2L688.8 570.7" stroke="#ff0000" stroke-width="1.6" fill="none"/>
<path d="M780.2 523.1L773.7 531.9" stroke="#ff0000" stroke-width="1.6" fill="none"/>
<path d="M780.2 523.1L769.2 523.8" stroke="#ff0000" stroke-width="1.6" fill="none"/>
<path d="M846.2 505.1L837.8 512.2" stroke="#ff0000" stroke-width="1.6" fill="none"/>
<path d="M846.2 505.1L835.4 503.2" stroke="#ff0000" stroke-width="1.6" fill="none"/>
<path d="M912 503.2L902.2 508.1" stroke="#ff0000" stroke-width="1.6" fill="none"/>
<path d="M912 503.2L901.9 498.8" stroke="#ff0000" stroke-width="1.6" fill="none"/>
<path d="M997.1 514.4L986.6 517.7" stroke="#ff0000" stroke-width="1.6" fill="none"/>
<path d="M997.1 514.4L987.8 508.5" stroke="#ff0000" stroke-width="1.6" fill="none"/>
<path d="M1576 703.4L1565.1 704.7" stroke="#ff0000" stroke-width="1.6" fill="none"/>
<path d="M1576 703.4L1568.0 695.9" stroke="#ff0000" stroke-width="1.6" fill="none"/>
<g fill="none" stroke="#e6e600" stroke-width="1.2">
<path d="M252.7 376.9h5v5h-5zM282.3 386.5h5v5h-5zM309.9 395.5h5v5h-5zM341.5 406.5h5v5h-5zM368.7 414.5h5v5h-5zM396.9 424.1h5v5h-5zM425.5 433.8h5v5h-5zM455.1 444.4h5v5h-5zM243.8 405.5h5v5h-5zM272.7 417.1h5v5h-5zM301.6 426.1h5v5h-5zM329.2 435.8h5v5h-5zM360.7 445.4h5v5h-5zM389.0 455.0h5v5h-5zM415.9 463.7h5v5h-5zM446.1 474.0h5v5h-5zM236.8 431.8h5v5h-5zM628.2 288.5h5v5h-5zM181.3 772.5h5v5h-5zM180.7 901.1h5v5h-5zM1574.8 684.3h5v5h-5zM1568.5 716.8h5v5h-5zM570.9 664.7h5v5h-5zM617.7 596.7h5v5h-5zM687.5 528.6h5v5h-5zM744.8 495.7h5v5h-5zM803.8 473.3h5v5h-5zM891.0 459.6h5v5h-5zM1010.3 478.2h5v5h-5zM1237.5 554.2h5v5h-5zM1577.5 669.3h5v5h-5zM831.0 195.6h5v5h-5zM681.3 304.7h5v5h-5zM628.7 288.3h5v5h-5zM707.9 206.8h5v5h-5zM786.9 222.0h5v5h-5zM815.8 220.3h5v5h-5zM802.1 261.1h5v5h-5zM849.4 250.9h5v5h-5zM758.2 344.1h5v5h-5zM803.3 344.1h5v5h-5zM768.9 199.8h5v5h-5zM938.3 90.0h5v5h-5zM846.9 225.0h5v5h-5zM886.0 225.0h5v5h-5zM885.3 232.0h5v5h-5zM915.9 241.9h5v5h-5zM903.9 261.9h5v5h-5zM892.2 301.7h5v5h-5zM871.8 330.9h5v5h-5zM933.8 277.3h5v5h-5zM939.1 316.2h5v5h-5zM901.0 326.1h5v5h-5zM915.7 241.9h5v5h-5zM904.2 261.9h5v5h-5zM1038.2 102.9h5v5h-5zM1035.7 209.1h5v5h-5zM1021.5 286.0h5v5h-5zM1053.7 336.6h5v5h-5zM1077.6 186.1h5v5h-5zM1132.9 197.1h5v5h-5zM1130.4 305.5h5v5h-5zM1053.9 278.1h5v5h-5zM1070.1 292.5h5v5h-5zM1078.3 312.7h5v5h-5zM1070.1 345.3h5v5h-5zM976.7 330.9h5v5h-5zM933.6 277.3h5v5h-5zM939.3 316.7h5v5h-5zM900.7 325.9h5v5h-5zM675.0 458.8h5v5h-5zM823.7 374.9h5v5h-5zM590.3 488.4h5v5h-5zM793.8 460.3h5v5h-5zM918.9 384.3h5v5h-5zM477.5 483.2h5v5h-5zM658.6 594.1h5v5h-5zM656.8 348.0h5v5h-5zM707.9 363.7h5v5h-5zM754.5 366.1h5v5h-5zM758.2 345.0h5v5h-5zM795.1 402.3h5v5h-5zM822.5 488.9h5v5h-5zM821.2 548.0h5v5h-5zM806.8 564.7h5v5h-5zM790.1 593.6h5v5h-5zM803.1 345.0h5v5h-5zM828.0 406.0h5v5h-5zM853.6 488.9h5v5h-5zM851.1 540.5h5v5h-5zM741.5 511.9h5v5h-5zM716.6 566.7h5v5h-5zM840.7 416.0h5v5h-5zM891.7 367.9h5v5h-5zM877.5 444.1h5v5h-5zM903.9 423.9h5v5h-5zM935.3 491.9h5v5h-5zM673.0 559.7h5v5h-5zM832.5 481.2h5v5h-5zM907.2 477.5h5v5h-5zM686.7 595.3h5v5h-5zM748.8 551.7h5v5h-5zM812.5 525.8h5v5h-5zM905.7 513.9h5v5h-5zM838.2 531.8h5v5h-5zM867.3 540.5h5v5h-5zM919.6 582.9h5v5h-5zM751.5 574.9h5v5h-5zM698.7 553.0h5v5h-5zM957.5 416.7h5v5h-5zM793.8 484.5h5v5h-5zM899.2 488.8h5v5h-5zM1000.9 445.1h5v5h-5zM1004.6 493.9h5v5h-5zM1002.1 528.8h5v5h-5zM903.7 423.9h5v5h-5zM934.9 491.9h5v5h-5zM961.8 534.3h5v5h-5zM919.2 384.3h5v5h-5zM997.1 349.2h5v5h-5zM1002.9 408.5h5v5h-5zM919.9 582.9h5v5h-5zM907.5 593.6h5v5h-5zM611.3 631.1h5v5h-5zM584.6 672.7h5v5h-5zM687.2 596.7h5v5h-5zM645.6 647.3h5v5h-5zM619.0 690.1h5v5h-5zM658.6 594.2h5v5h-5zM734.1 753.1h5v5h-5zM788.9 593.0h5v5h-5zM793.8 614.9h5v5h-5zM798.8 619.1h5v5h-5zM787.6 672.2h5v5h-5zM834.9 626.9h5v5h-5zM822.5 667.2h5v5h-5zM813.8 692.9h5v5h-5zM770.9 818.4h5v5h-5zM765.7 833.6h5v5h-5zM865.6 640.6h5v5h-5zM854.9 677.9h5v5h-5zM850.4 682.2h5v5h-5zM907.9 594.2h5v5h-5zM868.6 600.5h5v5h-5zM844.9 626.1h5v5h-5zM727.8 789.3h5v5h-5zM738.3 793.2h5v5h-5zM905.4 637.3h5v5h-5zM570.9 664.7h5v5h-5zM525.6 597.5h5v5h-5zM1056.9 627.9h5v5h-5zM1076.8 634.1h5v5h-5zM1107.2 643.8h5v5h-5zM1132.9 653.3h5v5h-5zM1160.8 662.7h5v5h-5zM1189.7 670.9h5v5h-5zM1217.8 680.7h5v5h-5zM1246.2 691.9h5v5h-5zM1277.6 702.1h5v5h-5zM1305.5 711.5h5v5h-5zM1332.9 720.5h5v5h-5zM1358.8 732.0h5v5h-5zM1389.5 740.8h5v5h-5zM1418.0 749.7h5v5h-5zM1447.9 760.0h5v5h-5zM1476.8 769.9h5v5h-5zM908.0 593.7h5v5h-5zM905.7 637.3h5v5h-5zM674.0 996.1h5v5h-5zM479.0 970.7h5v5h-5zM509.6 981.9h5v5h-5zM583.8 940.1h5v5h-5zM632.9 898.0h5v5h-5zM690.2 898.0h5v5h-5zM753.7 866.1h5v5h-5zM743.0 896.7h5v5h-5zM735.8 914.2h5v5h-5zM723.1 952.5h5v5h-5zM711.9 986.9h5v5h-5zM703.9 1011.8h5v5h-5zM781.6 874.8h5v5h-5zM771.1 907.7h5v5h-5zM787.8 968.7h5v5h-5zM461.8 844.4h5v5h-5z"/>
<path d="M642.1 247.2h7v7h-7zM651.4 221.8h7v7h-7zM661.8 190.6h7v7h-7zM534.1 91.5h7v7h-7zM732.5 157.2h7v7h-7zM265.7 345.0h7v7h-7zM467.4 511.5h7v7h-7zM218.2 789.8h7v7h-7zM204.9 826.7h7v7h-7zM192.3 859.6h7v7h-7zM202.5 830.4h7v7h-7zM780.9 184.9h7v7h-7zM843.7 213.8h7v7h-7zM859.4 205.8h7v7h-7zM716.4 208.6h7v7h-7zM705.2 238.9h7v7h-7zM695.2 266.8h7v7h-7zM692.2 278.3h7v7h-7zM759.7 218.0h7v7h-7zM755.5 228.5h7v7h-7zM651.4 221.8h7v7h-7zM703.7 243.4h7v7h-7zM745.0 252.9h7v7h-7zM867.6 236.0h7v7h-7zM887.5 216.8h7v7h-7zM746.3 250.9h7v7h-7zM733.8 282.8h7v7h-7zM725.6 302.2h7v7h-7zM741.8 326.9h7v7h-7zM738.0 270.1h7v7h-7zM766.7 301.2h7v7h-7zM891.2 156.2h7v7h-7zM882.5 169.2h7v7h-7zM919.4 167.7h7v7h-7zM910.7 179.9h7v7h-7zM949.8 180.7h7v7h-7zM941.8 191.1h7v7h-7zM917.9 228.5h7v7h-7zM938.6 237.7h7v7h-7zM930.3 245.9h7v7h-7zM967.0 104.4h7v7h-7zM919.4 167.7h7v7h-7zM910.9 179.9h7v7h-7zM992.9 121.9h7v7h-7zM949.6 180.7h7v7h-7zM941.3 191.1h7v7h-7zM918.2 228.5h7v7h-7zM1044.7 91.5h7v7h-7zM984.4 173.7h7v7h-7zM965.5 199.3h7v7h-7zM938.3 237.7h7v7h-7zM930.6 245.9h7v7h-7zM1085.1 123.1h7v7h-7zM1039.7 190.4h7v7h-7zM1032.0 224.0h7v7h-7zM1018.6 267.1h7v7h-7zM1176.0 221.0h7v7h-7zM1012.3 280.3h7v7h-7zM1014.8 280.3h7v7h-7zM495.4 422.9h7v7h-7zM560.7 444.1h7v7h-7zM571.7 447.8h7v7h-7zM617.7 456.8h7v7h-7zM730.1 436.1h7v7h-7zM486.5 453.1h7v7h-7zM549.2 475.0h7v7h-7zM561.7 479.0h7v7h-7zM605.8 489.2h7v7h-7zM730.1 487.4h7v7h-7zM538.0 506.4h7v7h-7zM552.5 511.6h7v7h-7zM528.1 534.8h7v7h-7zM542.5 539.5h7v7h-7zM582.6 554.0h7v7h-7zM948.5 510.9h7v7h-7zM890.0 561.9h7v7h-7zM1069.6 345.2h7v7h-7zM1115.7 360.2h7v7h-7zM1123.9 363.2h7v7h-7zM1219.8 397.8h7v7h-7zM1058.4 378.1h7v7h-7zM1103.7 394.3h7v7h-7zM1112.7 397.3h7v7h-7zM1209.1 429.4h7v7h-7zM1048.4 407.0h7v7h-7zM1046.7 413.2h7v7h-7zM1093.3 423.7h7v7h-7zM1102.7 426.7h7v7h-7zM1198.6 459.8h7v7h-7zM972.5 451.6h7v7h-7zM1035.5 449.1h7v7h-7zM1082.8 452.8h7v7h-7zM1093.3 456.1h7v7h-7zM1189.9 489.7h7v7h-7zM1027.8 473.5h7v7h-7zM1070.1 487.7h7v7h-7zM1007.3 535.8h7v7h-7zM1048.4 548.7h7v7h-7zM994.1 576.1h7v7h-7zM1036.5 581.1h7v7h-7zM957.0 415.0h7v7h-7zM997.4 566.2h7v7h-7zM948.1 510.9h7v7h-7zM521.8 606.4h7v7h-7zM507.4 654.3h7v7h-7zM562.4 620.1h7v7h-7zM657.8 662.7h7v7h-7zM690.7 675.4h7v7h-7zM753.7 691.4h7v7h-7zM776.2 697.8h7v7h-7zM806.3 707.3h7v7h-7zM836.9 716.3h7v7h-7zM557.5 669.9h7v7h-7zM644.6 706.1h7v7h-7zM686.0 718.8h7v7h-7zM737.8 733.5h7v7h-7zM764.2 739.9h7v7h-7zM792.8 748.4h7v7h-7zM821.7 757.6h7v7h-7zM864.6 769.1h7v7h-7zM689.5 639.3h7v7h-7zM673.3 766.3h7v7h-7zM628.9 760.9h7v7h-7zM782.1 616.9h7v7h-7zM725.6 782.5h7v7h-7zM802.3 622.6h7v7h-7zM757.5 758.4h7v7h-7zM747.5 788.3h7v7h-7zM831.0 631.3h7v7h-7zM786.6 767.8h7v7h-7zM776.7 797.0h7v7h-7zM814.8 777.1h7v7h-7zM804.8 808.2h7v7h-7zM853.9 790.8h7v7h-7zM843.2 815.7h7v7h-7zM1024.3 616.4h7v7h-7zM1011.8 651.8h7v7h-7zM982.4 771.6h7v7h-7zM984.9 604.4h7v7h-7zM974.2 636.3h7v7h-7zM972.5 641.8h7v7h-7zM983.7 608.9h7v7h-7zM436.9 911.9h7v7h-7zM463.8 922.9h7v7h-7zM426.9 939.1h7v7h-7zM453.3 950.3h7v7h-7zM864.1 768.5h7v7h-7zM982.0 771.2h7v7h-7z" fill="rgba(140,140,140,.3)"/>
<path d="M632.2 128.2h9M636.7 123.7v9M378.7 388.0h9M383.2 383.5v9M350.1 474.2h9M354.6 469.7v9M62.7 732.5h9M67.2 728.0v9M301.9 824.2h9M306.4 819.7v9M38.8 856.1h9M43.3 851.6v9M289.6 859.8h9M294.1 855.3v9M317.9 874.4h9M322.4 869.9v9M307.9 903.3h9M312.4 898.8v9M1448.9 484.1h9M1453.4 479.6v9M1520.3 606.0h9M1524.8 601.5v9M1561.2 656.5h9M1565.7 652.0v9M1287.5 591.4h9M1292.0 586.9v9M1283.1 626.0h9M1287.6 621.5v9M1472.5 695.7h9M1477.0 691.2v9M1461.5 732.5h9M1466.0 728.0v9M1441.5 798.0h9M1446.0 793.5v9M756.0 174.7h9M760.5 170.2v9M912.9 290.6h9M917.4 286.1v9M676.8 236.2h9M681.3 231.7v9M900.5 317.7h9M905.0 313.2v9M1026.3 369.0h9M1030.8 364.5v9M667.3 261.4h9M671.8 256.9v9M783.9 326.6h9M788.4 322.1v9M714.6 336.6h9M719.1 332.1v9M666.8 266.4h9M671.3 261.9v9M913.9 126.1h9M918.4 121.6v9M942.0 139.8h9M946.5 135.3v9M890.2 346.6h9M894.7 342.1v9M900.2 290.5h9M904.7 286.0v9M911.4 289.3h9M915.9 284.8v9M900.7 319.2h9M905.2 314.7v9M861.1 326.6h9M865.6 322.1v9M913.9 289.3h9M918.4 284.8v9M942.3 139.3h9M946.8 134.8v9M970.2 154.8h9M974.7 150.3v9M1010.1 141.1h9M1014.6 136.6v9M1061.6 160.5h9M1066.1 156.0v9M1035.7 313.7h9M1040.2 309.2v9M1152.1 266.1h9M1156.6 261.6v9M1121.4 335.4h9M1125.9 330.9v9M997.1 215.3h9M1001.6 210.8v9M977.7 256.1h9M982.2 251.6v9M991.9 308.7h9M996.4 304.2v9M966.0 335.4h9M970.5 330.9v9M899.2 291.3h9M903.7 286.8v9M527.1 437.1h9M531.6 432.6v9M701.4 450.3h9M705.9 445.8v9M776.2 408.5h9M780.7 404.0v9M846.6 355.4h9M851.1 350.9v9M516.6 467.8h9M521.1 463.3v9M666.8 491.9h9M671.3 487.4v9M760.7 477.0h9M765.2 472.5v9M854.1 424.7h9M858.6 420.2v9M945.5 359.9h9M950.0 355.4v9M506.1 497.4h9M510.6 492.9v9M496.9 526.3h9M501.4 521.8v9M618.7 576.6h9M623.2 572.1v9M597.6 371.6h9M602.1 367.1v9M532.8 571.7h9M537.3 567.2v9M571.9 590.3h9M576.4 585.8v9M635.7 405.3h9M640.2 400.8v9M740.8 404.3h9M745.3 399.8v9M774.4 376.6h9M778.9 372.1v9M806.8 448.4h9M811.3 443.9v9M813.5 378.1h9M818.0 373.6v9M832.9 424.7h9M837.4 420.2v9M854.1 538.0h9M858.6 533.5v9M841.7 589.1h9M846.2 584.6v9M766.9 435.4h9M771.4 430.9v9M890.2 348.7h9M894.7 344.2v9M887.0 387.3h9M891.5 382.8v9M867.8 482.0h9M872.3 477.5v9M856.6 523.1h9M861.1 518.6v9M917.6 460.8h9M922.1 456.3v9M639.9 596.6h9M644.4 592.1v9M705.9 538.0h9M710.4 533.5v9M785.6 499.4h9M790.1 494.9v9M778.1 540.5h9M782.6 536.0v9M722.1 566.7h9M726.6 562.2v9M734.6 545.5h9M739.1 541.0v9M873.5 452.1h9M878.0 447.6v9M938.8 463.3h9M943.3 458.8v9M556.5 497.4h9M561.0 492.9v9M644.9 541.8h9M649.4 537.3v9M714.1 514.4h9M718.6 509.9v9M773.2 486.5h9M777.7 482.0v9M809.3 513.6h9M813.8 509.1v9M866.6 511.9h9M871.1 507.4v9M752.5 527.3h9M757.0 522.8v9M851.6 480.7h9M856.1 476.2v9M839.2 450.3h9M843.7 445.8v9M810.5 587.8h9M815.0 583.3v9M715.9 576.6h9M720.4 572.1v9M649.9 565.4h9M654.4 560.9v9M845.9 469.0h9M850.4 464.5v9M935.1 472.8h9M939.6 468.3v9M950.0 472.0h9M954.5 467.5v9M1170.7 384.3h9M1175.2 379.8v9M1160.0 417.2h9M1164.5 412.7v9M1150.1 446.6h9M1154.6 442.1v9M1140.9 477.0h9M1145.4 472.5v9M954.0 488.7h9M958.5 484.2v9M951.5 524.3h9M956.0 519.8v9M1016.8 508.6h9M1021.3 504.1v9M1058.7 521.8h9M1063.2 517.3v9M917.9 460.8h9M922.4 456.3v9M945.3 359.9h9M949.8 355.4v9M948.6 471.5h9M953.1 467.0v9M938.3 463.3h9M942.8 458.8v9M934.1 473.3h9M938.6 468.8v9M1121.7 518.8h9M1126.2 514.3v9M1287.8 591.6h9M1292.3 587.1v9M950.8 595.3h9M955.3 590.8v9M483.0 752.4h9M487.5 747.9v9M591.8 633.6h9M596.3 629.1v9M624.0 650.5h9M628.5 646.0v9M721.6 687.1h9M726.1 682.6v9M600.0 691.6h9M604.5 687.1v9M922.1 774.1h9M926.6 769.6v9M509.6 800.5h9M514.1 796.0v9M560.2 839.1h9M564.7 834.6v9M672.3 619.9h9M676.8 615.4v9M651.1 835.9h9M655.6 831.4v9M701.4 606.2h9M705.9 601.7v9M634.9 737.5h9M639.4 733.0v9M764.4 598.7h9M768.9 594.2v9M766.9 657.8h9M771.4 653.3v9M705.9 844.1h9M710.4 839.6v9M791.8 844.6h9M796.3 840.1v9M878.5 660.5h9M883.0 656.0v9M937.6 642.8h9M942.1 638.3v9M639.9 598.7h9M644.4 594.2v9M664.8 623.6h9M669.3 619.1v9M610.0 645.3h9M614.5 640.8v9M516.6 817.9h9M521.1 813.4v9M530.3 824.1h9M534.8 819.6v9M547.0 834.1h9M551.5 829.6v9M820.5 664.7h9M825.0 660.2v9M995.9 715.3h9M1000.4 710.8v9M922.4 774.3h9M926.9 769.8v9M937.3 642.8h9M941.8 638.3v9M951.5 596.2h9M956.0 591.7v9M944.1 604.4h9M948.6 599.9v9M1287.8 592.5h9M1292.3 588.0v9M1282.3 608.7h9M1286.8 604.2v9M1282.8 626.1h9M1287.3 621.6v9M447.1 881.1h9M451.6 876.6v9M596.0 926.1h9M600.5 921.6v9M744.2 979.5h9M748.7 975.0v9M861.3 1016.1h9M865.8 1011.6v9M586.6 964.5h9M591.1 960.0v9M604.7 853.2h9M609.2 848.7v9M571.9 995.6h9M576.4 991.1v9M618.4 963.8h9M622.9 959.3v9M680.7 950.3h9M685.2 945.8v9M706.1 911.7h9M710.6 907.2v9M814.5 895.5h9M819.0 891.0v9M770.4 1015.6h9M774.9 1011.1v9M921.9 773.7h9M926.4 769.2v9M996.0 715.0h9M1000.5 710.5v9" stroke-width="1.5"/>
</g>
<path d="M293.8 99.6h4v4h-4zM321.1 109.6h4v4h-4zM351.0 119.6h4v4h-4zM378.6 128.9h4v4h-4zM410.1 139.5h4v4h-4zM436.7 148.8h4v4h-4zM466.6 158.1h4v4h-4zM494.9 168.4h4v4h-4zM524.1 178.0h4v4h-4zM553.0 188.3h4v4h-4zM582.3 198.0h4v4h-4zM609.5 208.3h4v4h-4zM638.8 218.6h4v4h-4zM389.1 852.5h4v4h-4zM376.8 886.3h4v4h-4zM1297.2 460.2h4v4h-4zM1325.2 468.8h4v4h-4zM1355.1 480.5h4v4h-4zM1386.6 490.4h4v4h-4zM1412.5 498.4h4v4h-4zM1440.8 507.7h4v4h-4zM1466.4 516.7h4v4h-4zM1498.3 527.3h4v4h-4zM1527.5 538.3h4v4h-4zM1554.8 547.9h4v4h-4zM1284.6 488.4h4v4h-4zM1318.5 500.1h4v4h-4zM1343.8 508.4h4v4h-4zM1372.3 518.7h4v4h-4zM1400.9 528.3h4v4h-4zM1430.8 539.3h4v4h-4zM1457.4 548.6h4v4h-4zM1484.7 558.6h4v4h-4zM1514.6 568.2h4v4h-4zM1543.8 579.5h4v4h-4zM1572.0 589.8h4v4h-4zM638.9 218.5h4v4h-4zM668.8 228.0h4v4h-4zM494.9 168.2h4v4h-4zM524.3 177.9h4v4h-4zM553.5 188.1h4v4h-4zM582.6 197.8h4v4h-4zM610.3 208.3h4v4h-4zM953.0 568.4h4v4h-4zM634.9 502.4h4v4h-4zM659.1 508.1h4v4h-4zM689.2 515.4h4v4h-4zM709.9 518.8h4v4h-4zM744.0 525.8h4v4h-4zM771.9 531.5h4v4h-4zM804.3 538.0h4v4h-4zM833.0 543.7h4v4h-4zM858.1 548.7h4v4h-4zM896.5 556.5h4v4h-4zM921.1 561.2h4v4h-4zM631.7 531.8h4v4h-4zM656.1 538.5h4v4h-4zM681.8 544.7h4v4h-4zM703.7 549.2h4v4h-4zM735.8 556.0h4v4h-4zM765.2 561.7h4v4h-4zM797.3 567.4h4v4h-4zM827.2 574.4h4v4h-4zM852.6 578.6h4v4h-4zM885.3 586.1h4v4h-4zM911.9 591.1h4v4h-4zM618.2 561.9h4v4h-4zM630.9 564.7h4v4h-4zM644.1 567.9h4v4h-4zM659.3 572.1h4v4h-4zM669.3 574.6h4v4h-4zM683.5 577.6h4v4h-4zM709.7 583.4h4v4h-4zM723.4 585.6h4v4h-4zM735.8 588.1h4v4h-4zM751.5 591.1h4v4h-4zM764.5 593.8h4v4h-4zM779.9 595.8h4v4h-4zM1239.3 440.9h4v4h-4zM1265.9 450.8h4v4h-4zM1297.3 460.1h4v4h-4zM1325.2 468.8h4v4h-4zM1355.6 480.7h4v4h-4zM1230.0 470.3h4v4h-4zM1259.2 480.0h4v4h-4zM1284.8 488.2h4v4h-4zM1319.0 500.4h4v4h-4zM1344.1 508.6h4v4h-4zM1372.5 519.1h4v4h-4zM921.2 560.9h4v4h-4zM953.0 567.9h4v4h-4zM985.7 574.6h4v4h-4zM911.7 590.8h4v4h-4zM735.8 589.2h4v4h-4zM751.5 591.0h4v4h-4zM764.5 593.5h4v4h-4zM779.9 596.2h4v4h-4zM794.3 599.7h4v4h-4zM809.3 602.4h4v4h-4zM823.5 605.9h4v4h-4zM838.4 609.2h4v4h-4zM855.4 612.2h4v4h-4zM865.8 614.2h4v4h-4zM884.0 617.9h4v4h-4zM899.0 620.6h4v4h-4zM915.7 624.1h4v4h-4zM930.1 626.9h4v4h-4zM943.3 629.8h4v4h-4zM911.7 591.0h4v4h-4zM945.3 598.5h4v4h-4zM974.0 605.4h4v4h-4zM899.2 620.9h4v4h-4zM915.4 624.1h4v4h-4zM929.9 627.1h4v4h-4zM943.3 629.6h4v4h-4zM959.0 633.1h4v4h-4zM808.3 997.6h4v4h-4z" fill="#00ffff"/>
<path d="M594.1 524.3h6v6h-6zM604.8 494.4h6v6h-6z" fill="#00ffff"/>
<path d="M863.8 182.9h6v6h-6zM939.1 215.3h6v6h-6zM939.3 215.3h6v6h-6zM1095.0 344.8h6v6h-6zM571.2 441.6h6v6h-6zM562.2 498.9h6v6h-6zM555.7 525.1h6v6h-6zM540.5 545.7h6v6h-6zM1095.0 345.7h6v6h-6zM1088.1 367.4h6v6h-6zM1075.8 408.5h6v6h-6zM1058.2 456.1h6v6h-6zM1057.2 462.3h6v6h-6zM762.7 715.8h6v6h-6zM834.4 738.4h6v6h-6zM832.7 739.9h6v6h-6z" fill="#ffff00" stroke="#d8d800" stroke-width="1"/>
<path d="M466.5 966.4h4v4h-4zM494.1 978.0h4v4h-4zM605.0 684.4h4v4h-4zM647.4 612.2h4v4h-4zM697.2 565.2h4v4h-4zM778.2 521.1h4v4h-4zM844.2 503.1h4v4h-4zM910.0 501.2h4v4h-4zM995.1 512.4h4v4h-4zM1574.0 701.4h4v4h-4z" fill="#c81400" stroke="#e6e600" stroke-width="1"/>
<path d="M42 103.5H184" stroke="#e6e6e6" stroke-width="2.4"/>
<rect x="161.6" y="94.5" width="4" height="18" fill="#0078d7"/>
<path d="M42.5 117v11M42.5 122.5H143.5M143.5 117v11M93 120v5" stroke="#fff" stroke-width="1" fill="none" shape-rendering="crispEdges"/>
<g fill="#dcdcdc" font-family="'Liberation Mono','Noto Serif CJK SC',serif" font-size="14px" letter-spacing="-0.4"><text x="38" y="141">0</text><text x="120" y="141">10.0 m</text></g>
</svg>
<svg style="left:0;top:0;pointer-events:none" width="1927" height="1044" viewBox="0 0 1927 1044"><defs>
<linearGradient id="gBlue" x1="0" y1="0" x2="0" y2="1"><stop offset="0" stop-color="#6b9ad2"/><stop offset="1" stop-color="#3465a4"/></linearGradient>
<linearGradient id="gGreen" x1="0" y1="0" x2="1" y2="1"><stop offset="0" stop-color="#8ae234"/><stop offset=".5" stop-color="#5db80e"/><stop offset="1" stop-color="#4e9a06"/></linearGradient>
<linearGradient id="gLens" x1="0" y1="0" x2="0" y2="1"><stop offset="0" stop-color="#b9d3ef"/><stop offset=".45" stop-color="#9ec1ea"/><stop offset=".5" stop-color="#6ea4e2"/><stop offset="1" stop-color="#86b6ea"/></linearGradient>
<linearGradient id="gMetal" x1="0" y1="0" x2="1" y2="0"><stop offset="0" stop-color="#888"/><stop offset=".5" stop-color="#e0e0e0"/><stop offset="1" stop-color="#777"/></linearGradient>
<linearGradient id="gBar" x1="0" y1="0" x2="1" y2="0"><stop offset="0" stop-color="#000" stop-opacity="0"/><stop offset="1" stop-color="#000"/></linearGradient>
<linearGradient id="gTrash" x1="0" y1="0" x2="1" y2="0"><stop offset="0" stop-color="#9a9a9a"/><stop offset=".4" stop-color="#d8d8d8"/><stop offset="1" stop-color="#777"/></linearGradient>
<radialGradient id="gSkin" cx=".4" cy=".35" r=".7"><stop offset="0" stop-color="#ffd9a0"/><stop offset="1" stop-color="#e08a1e"/></radialGradient>
</defs><clipPath id="crl"><rect x="1593" y="713" width="302" height="114"/></clipPath><g transform="translate(5 61)"><path d="M2 1.5h8l2.5 3h8.5v8H2z" fill="#7d7d7d" stroke="#5e5e5e" stroke-width=".8"/><path d="M1.2 22L1.2 12.5Q1.2 11.5 2.2 11.5L7.5 11.5L9 9.3L21.8 9.3Q22.8 9.3 22.8 10.3L22.8 22Z" fill="url(#gBlue)" stroke="#2c5a98" stroke-width=".9"/></g><g transform="translate(37 61)"><path d="M1.2 1.2h20.6v20.6H3.2l-2-2z" fill="#4f78b6" stroke="#3a5f9a" stroke-width=".8"/><rect x="4" y="1.5" width="15" height="11.5" fill="#fff"/><rect x="4" y="1.5" width="15" height="2.2" fill="#d9301c"/><path d="M4 6.5h15M4 8.7h15M4 10.9h15" stroke="#e6e6e6" stroke-width=".7"/><rect x="5.5" y="14.5" width="11.5" height="7" fill="url(#gMetal)" stroke="#555" stroke-width=".6"/><rect x="7.5" y="15.5" width="2.2" height="5" fill="#3d5f98"/></g><g transform="translate(67 61)"><ellipse cx="11.6" cy="22" rx="9" ry="1.3" fill="#000" opacity=".13"/><path d="M6 1.6h11.7v8.1h5.3L11.6 22.6L0.6 9.7H6z" fill="url(#gGreen)" stroke="#3f8a06" stroke-width="1.1" stroke-linejoin="round"/></g><g transform="translate(98 61)"><ellipse cx="11.8" cy="22" rx="9" ry="1.3" fill="#000" opacity=".13"/><path d="M11.8 0.9L22.8 13.5h-5.2v8.2H6v-8.2H0.9z" fill="url(#gGreen)" stroke="#3f8a06" stroke-width="1.1" stroke-linejoin="round"/></g><g transform="translate(132.5 60.5)"><ellipse cx="12" cy="22" rx="9" ry="1.2" fill="#000" opacity=".08"/><path d="M2.6 9L11.7 1.9V5.6C17.2 5.6 20.6 9 20.6 13.5C20.6 17.5 18.6 20.5 15.6 21.6L13.3 19.4C15 18 15.6 16.3 15 14.8C14.4 13.4 13 12.9 11.7 12.9V16.8Z" fill="#a6a6a6"/></g><g transform="translate(189.3 60.5)"><ellipse cx="-12" cy="22" rx="9" ry="1.2" fill="#000" opacity=".1"/><path d="M2.6 9L11.7 1.9V5.6C17.2 5.6 20.6 9 20.6 13.5C20.6 17.5 18.6 20.5 15.6 21.6L13.3 19.4C15 18 15.6 16.3 15 14.8C14.4 13.4 13 12.9 11.7 12.9V16.8Z" fill="#66d813" stroke="#4fc008" stroke-width=".6" transform="scale(-1 1)"/></g><g transform="translate(211.7 70.5)"><path d="M5.5 6L11.6 12.4" stroke="#5c5c5c" stroke-width="2.8" stroke-linecap="round"/><circle cx="0" cy="0" r="8.4" fill="url(#gLens)" stroke="#aeaeae" stroke-width="1.8"/><circle cx="0" cy="0" r="9.2" fill="none" stroke="#8a8a8a" stroke-width=".5"/></g><g transform="translate(233 61)"><rect x=".8" y=".8" width="21.4" height="21.8" rx="2.5" fill="#f6f6f6" stroke="#8c8c8c" stroke-width="1.4"/><rect x="5" y="6" width="4" height="12.5" rx="1" fill="#5a6668"/><rect x="4.5" y="5.6" width="5.2" height="6.2" rx="1" fill="#fff" stroke="#9a9a9a" stroke-width=".6"/><rect x="13.3" y="6.3" width="4" height="12.2" rx="1" fill="#4a5658"/><rect x="12.7" y="11.5" width="5.4" height="6.2" rx="1" fill="#fff" stroke="#9a9a9a" stroke-width=".6"/></g><g transform="translate(268 60)"><g fill="#a8a8a8" stroke="none"><path d="M6.2 6.2l3-2.6v1.8h5.6V3.6l3 2.6l-3 2.6V7h-5.6v1.8z"/><rect x="2.2" y="12.9" width="3.8" height="3.8"/><rect x="9.4" y="12.4" width="5.6" height="5.6"/><rect x="18.4" y="12.9" width="3.6" height="3.6"/><rect x="5" y="14.3" width="14" height="1.2"/></g></g><g transform="translate(298 60)"><g fill="#a8a8a8" stroke="none"><path d="M3.4 5.6h3.4V3.9l2.8 2.3l-2.8 2.3V6.8H3.4z"/><path d="M22 5.6h-3.4V3.9l-2.8 2.3l2.8 2.3V6.8H22z"/><rect x="2.7" y="12.9" width="3.8" height="3.8"/><rect x="9.6" y="12.4" width="5.8" height="5.8"/><rect x="19.2" y="12.9" width="3.4" height="3.4"/><rect x="5" y="14.3" width="15" height="1.2"/></g></g><g transform="translate(330 60)"><path d="M2 7.6L7.2 3.9V6.3H16.4V3.9L21.6 7.6L16.4 11.3V8.9H7.2V11.3Z" fill="#000"/><path d="M4.5 18H19.5" stroke="#6a6a6a" stroke-width="2"/><rect x="2.3" y="15.8" width="4.6" height="4.6" rx=".8" fill="#fff" stroke="#e2553a" stroke-width="1.5"/><rect x="17.2" y="15.8" width="4.6" height="4.6" rx=".8" fill="#fff" stroke="#e2553a" stroke-width="1.5"/></g><g transform="translate(365 60)"><g fill="#999"><path d="M17.5 2.5l4 4.6h-2.6v5.3h-2.8V7.1h-2.6z"/><path d="M2.6 17.1l4.6-3.8v2.5h5.5v2.6H7.2v2.5z"/></g></g><g transform="translate(407.2 60.7)"><rect x="0" y="0" width="13.6" height="23.8" fill="#ffa500"/><path d="M6.9 1.5v2.6M6.9 8.3v2.6M6.9 14v2.6M6.9 20.2v2.3" stroke="#fff" stroke-width="2"/></g><g transform="translate(439 60.7)"><rect width="13" height="23.8" fill="#808080"/><path d="M6.4 1.5v2.6M6.4 8.3v2.6M6.4 14v2.6M6.4 20.2v2.3" stroke="#fff" stroke-width="2"/></g><g transform="translate(470 60.7)"><rect width="12.7" height="23.8" fill="#808080"/><path d="M6.2 1.5v2.6M6.2 20.2v2.3" stroke="#fff" stroke-width="2"/><circle cx="6.1" cy="11.9" r="4.2" fill="#fff"/></g><g transform="translate(494.6 67.9)"><clipPath id="cw"><rect width="24.4" height="16.6"/></clipPath><g clip-path="url(#cw)"><rect width="24.4" height="16.6" fill="#e59a9a"/><g fill="#cc2f2f"><path d="M0.0 3.0h5v1.9h-5z"/><path d="M6.0 3.0h5v1.9h-5z"/><path d="M12.0 3.0h5v1.9h-5z"/><path d="M18.0 3.0h5v1.9h-5z"/><path d="M24.0 3.0h5v1.9h-5z"/><path d="M-2.0 5.8h5v1.9h-5z"/><path d="M4.0 5.8h5v1.9h-5z"/><path d="M10.0 5.8h5v1.9h-5z"/><path d="M16.0 5.8h5v1.9h-5z"/><path d="M22.0 5.8h5v1.9h-5z"/><path d="M0.0 8.6h5v1.9h-5z"/><path d="M6.0 8.6h5v1.9h-5z"/><path d="M12.0 8.6h5v1.9h-5z"/><path d="M18.0 8.6h5v1.9h-5z"/><path d="M24.0 8.6h5v1.9h-5z"/><path d="M-2.0 11.4h5v1.9h-5z"/><path d="M4.0 11.4h5v1.9h-5z"/><path d="M10.0 11.4h5v1.9h-5z"/><path d="M16.0 11.4h5v1.9h-5z"/><path d="M22.0 11.4h5v1.9h-5z"/><path d="M0.0 14.2h5v1.9h-5z"/><path d="M6.0 14.2h5v1.9h-5z"/><path d="M12.0 14.2h5v1.9h-5z"/><path d="M18.0 14.2h5v1.9h-5z"/><path d="M24.0 14.2h5v1.9h-5z"/></g><rect width="24.4" height="2.6" fill="#555"/></g></g><g transform="translate(531 64)"><rect width="23.3" height="18.8" fill="#fff"/><path d="M5 1.5h13.5l3 5.5h-19.5z" fill="#000"/><path d="M6.2 3h11l1.9 4h-14.8z" fill="#fff"/><rect x="1" y="6.8" width="21.8" height="7.6" rx="1.5" fill="#000"/><rect x="2" y="13.5" width="3.2" height="4.2" rx=".8" fill="#000"/><rect x="18.4" y="13.5" width="3.2" height="4.2" rx=".8" fill="#000"/><circle cx="3.7" cy="9.9" r="1.3" fill="#fff"/><circle cx="19.7" cy="9.9" r="1.3" fill="#fff"/></g><g transform="translate(564 62)"><rect x=".5" y=".5" width="20" height="20.5" rx="3" fill="#fff" opacity=".9"/><rect x="1.7" y="1.3" width="16.6" height="16.1" rx="3" fill="#000"/><rect x="3.8" y="3.3" width="12.4" height="4.7" rx=".8" fill="#fff"/><rect x="3.4" y="16" width="3" height="3.7" rx=".7" fill="#000"/><rect x="13.6" y="16" width="3" height="3.7" rx=".7" fill="#000"/><circle cx="4.6" cy="13.7" r="1.3" fill="#fff"/><circle cx="15.2" cy="13.7" r="1.3" fill="#fff"/></g><g transform="translate(597.8 60.7)"><rect width="24.2" height="24" fill="#874b04"/><rect x="9.6" y="1.5" width="4.8" height="15" rx="2.4" fill="#fff"/><circle cx="12" cy="20" r="2.7" fill="#fff"/></g><g transform="translate(629.2 60.7)"><rect width="23.7" height="24" fill="#fff"/><g fill="#734a08"><ellipse cx="7.3" cy="8.4" rx="4.5" ry="6.9"/><path d="M6.2 13h2.2l.9 9.2h-4z"/><path d="M13.8 1.5h1.1v7h1.3v-7h1.1v7h1.3v-7h1.1v8.5q0 2.2-2.3 2.6l1 9.6h-3.7l1-9.6q-2.3-.4-2.3-2.6z"/></g></g><g transform="translate(665.2 66.2)"><path d="M0 0h1.8v1.6h1.7V0h2.3v1.6h1.7V0h1.9v3.9h-1.4v3.4h2.2l1.7-2.9l1.7 2.9h2.2V3.9h-1.4V0h1.9v1.6h1.7V0h2.3v1.6h1.7V0h1.6v3.9h-1.4v9.5h-9v-2.2q0-1.3-1.3-1.3t-1.3 1.3v2.2h-9V3.9H0z" fill="#7d4524"/></g><g transform="translate(701.9 61.1)"><path d="M.8 .8h4.4v16.2l5.6-4.6v4.6l5.6-4.6v4.6l5.4-4.6v10.8H.8z" fill="#8b7340" stroke="#000" stroke-width="1.5" stroke-linejoin="miter"/></g><path d="M9 96.8L19 97.7" stroke="#2e3436" stroke-width="1.6"/><path d="M9.3 98.5v8.5" stroke="#c4c4c4" stroke-width="1"/><rect x="6.8" y="94.5" width="4.3" height="4.3" rx=".5" fill="#fff" stroke="#e2553a" stroke-width="1.3"/><rect x="16.9" y="95.4" width="4.3" height="4.3" rx=".5" fill="#fff" stroke="#e2553a" stroke-width="1.3"/><rect x="8.0" y="106.8" width="3.6" height="3.6" rx=".5" fill="#bbb" stroke="#8a8a8a" stroke-width="1"/><path d="M12.3 105.6L15.8 101.8M16.6 104.2V100.9H13.3" stroke="#000" stroke-width="1.5" fill="none"/><path d="M21.4 102.8l2 2.6h-1.4v2.8h2.8v-1.4l2.6 2l-2.6 2v-1.4h-2.8v2.8h1.4l-2 2.6l-2-2.6h1.4v-2.8h-2.8v1.4l-2.6-2l2.6-2v1.4h2.8v-2.8h-1.4z" fill="#000"/><path d="M8 144.7L23.5 129.4" stroke="#f4ec3a" stroke-width="4" stroke-linecap="round"/><rect x="19.6" y="125.4" width="8" height="8" rx="1" fill="#f4ec3a"/><path d="M8 144.7L23.5 129.4" stroke="#111" stroke-width="1.4"/><rect x="21.2" y="127.0" width="4.8" height="4.8" rx=".5" fill="#fff" stroke="#e2553a" stroke-width="1.5"/><rect x="6.0" y="142.9" width="3.8" height="3.8" rx=".5" fill="#fff" stroke="#e2553a" stroke-width="1.3"/><path d="M8.8 156.7L11 165.1L7.9 176.8M23.1 156.7L26.1 161.8L23.9 166.9L21 171.9L23.1 176.8" stroke="#222" stroke-width="1.2" fill="none"/><path d="M14 166.2h4" stroke="#000" stroke-width="1.3"/><path d="M17.2 163.6l3 2.6l-3 2.6z" fill="#000"/><rect x="6.9" y="154.8" width="3.8" height="3.8" rx=".5" fill="#fff" stroke="#e2553a" stroke-width="1.2"/><rect x="9.1" y="163.2" width="3.8" height="3.8" rx=".5" fill="#fff" stroke="#e2553a" stroke-width="1.2"/><rect x="6.0" y="174.9" width="3.8" height="3.8" rx=".5" fill="#fff" stroke="#e2553a" stroke-width="1.2"/><rect x="21.2" y="154.8" width="3.8" height="3.8" rx=".5" fill="#fff" stroke="#e2553a" stroke-width="1.2"/><rect x="24.2" y="159.9" width="3.8" height="3.8" rx=".5" fill="#fff" stroke="#e2553a" stroke-width="1.2"/><rect x="22.0" y="165.0" width="3.8" height="3.8" rx=".5" fill="#fff" stroke="#e2553a" stroke-width="1.2"/><rect x="19.1" y="170.0" width="3.8" height="3.8" rx=".5" fill="#fff" stroke="#e2553a" stroke-width="1.2"/><rect x="21.2" y="174.9" width="3.8" height="3.8" rx=".5" fill="#fff" stroke="#e2553a" stroke-width="1.2"/><g transform="translate(6 232.2) scale(1.0)"><path d="M4.7 10.4h16.2l-4.4 5.2h-16.4z" fill="#b59a98" stroke="#4a4a4a" stroke-width="0.9" stroke-linejoin="round"/><path d="M4.7 5.2h16.2l-4.4 5.2h-16.4z" fill="#b59a98" stroke="#4a4a4a" stroke-width="0.9" stroke-linejoin="round"/><path d="M4.7 0.0h16.2l-4.4 5.2h-16.4z" fill="#b59a98" stroke="#4a4a4a" stroke-width="0.9" stroke-linejoin="round"/></g><g transform="translate(5.4 259) scale(1.0)"><path d="M.4 2.6L7.8 .3L22.6 14.5L14.6 22.6L.4 9z" fill="#f3f0e6" stroke="#9b9b9b" stroke-width="1" stroke-linejoin="round"/><circle cx="4.6" cy="4.9" r="1.6" fill="#c2dcf3" stroke="#999" stroke-width=".7"/><g transform="translate(12.2 12) rotate(44)"><rect x="-5.6" y="-3.4" width="11.2" height="6.8" rx=".8" fill="#3b6ea8"/><path d="M-4 -1.4h8M-4 .9h8" stroke="#8fb2dc" stroke-width=".9"/></g></g><g transform="translate(9.3 294.1) scale(1.0)"><path d="M15.2 0V14.6H6.3z" fill="#d9a6b8" fill-opacity=".7" stroke="#e8401c" stroke-width="0.9"/><path d="M0 0V14.6" stroke="#e8401c" stroke-width="0.9"/><rect x="-1.4" y="-1.4" width="2.8" height="2.8" fill="#e8401c"/><rect x="-1.4" y="13.2" width="2.8" height="2.8" fill="#e8401c"/><rect x="13.8" y="-1.4" width="2.8" height="2.8" fill="#e8401c"/><rect x="13.8" y="13.2" width="2.8" height="2.8" fill="#e8401c"/><rect x="4.9" y="13.2" width="2.8" height="2.8" fill="#e8401c"/><rect x="4.9" y="4.2" width="2.8" height="2.8" fill="#e8401c"/></g><g transform="translate(6.6 322.4) scale(1.0)"><path d="M5 5L17.7 2.5M5 5L17.7 11.3M5 5L2.5 17.5M5 5L11.6 17.5" stroke="#111" stroke-width="1.2"/><rect x=".5" y=".5" width="7.6" height="7.2" rx=".6" fill="#fff" stroke="#e2553a" stroke-width="1.5"/><rect x="15.6" y="0.4" width="4.2" height="4.2" rx=".5" fill="#fff" stroke="#e2553a" stroke-width="1.2"/><rect x="15.6" y="9.2" width="4.2" height="4.2" rx=".5" fill="#fff" stroke="#e2553a" stroke-width="1.2"/><rect x="0.4" y="15.4" width="4.2" height="4.2" rx=".5" fill="#fff" stroke="#e2553a" stroke-width="1.2"/><rect x="9.5" y="15.4" width="4.2" height="4.2" rx=".5" fill="#fff" stroke="#e2553a" stroke-width="1.2"/></g><g fill="#90ee90" stroke="#2e3436" stroke-width="1.5" stroke-linejoin="miter"><path d="M7.2 358.1L13.7 355V368.7L7.2 371.8z"/><path d="M13.7 355L20.2 358.1V371.8L13.7 368.7z"/><path d="M20.2 358.1L26.5 355.6V368.7L20.2 371.8z"/></g><g transform="translate(6 384.2) scale(1.0)"><ellipse cx="11" cy="21" rx="9" ry="1.5" fill="#000" opacity=".1"/><path d="M7.7 5.6L13.9 .6V3.5C19 3.5 21.6 6.5 21.4 10.4C21.2 13.4 19.4 15.4 17 15.8L15.6 13.7C17 12.8 17.6 11.4 17.2 10.1C16.8 8.9 15.3 8.4 13.9 8.4V11.2Z" fill="#f5d51e" stroke="#e0b800" stroke-width=".6"/><path d="M14.5 16.2L8.3 21.4V18.4C3.2 18.4 .4 15.4 .6 11.5C.8 8.5 2.4 6.6 4.6 6.1L6.2 8.2C5 9.2 4.4 10.5 4.8 11.8C5.2 13 6.9 13.5 8.3 13.5V10.6Z" fill="#73d216" stroke="#4eaa0a" stroke-width=".6"/></g><ellipse cx="11.5" cy="428" rx="4.9" ry="5.2" fill="#a40000"/><path d="M8.6 420.5Q8.2 415.6 13 415.6Q17.6 415.6 17 421.5L15.5 424.5H10z" fill="#c8961e"/><circle cx="13.2" cy="420.6" r="3" fill="url(#gSkin)"/><path d="M14 435.3Q14 426.8 20.7 426.8Q27.4 426.8 27.4 435.3Q20.7 436.8 14 435.3z" fill="#3465a4"/><path d="M19.4 427.2l1.3 3.8l1.3-3.8z" fill="#fff"/><circle cx="20.5" cy="422.8" r="3.8" fill="url(#gSkin)" stroke="#b86a10" stroke-width=".5"/><path d="M6 452.8h4.6v-2.8l5.2 5.8l-5.2 5.8v-2.8H6z" fill="#3465a4" stroke="#204a87" stroke-width=".6"/><path d="M28 452.8h-4.6v-2.8l-5.2 5.8l5.2 5.8v-2.8H28z" fill="#b52020" stroke="#8a0f0f" stroke-width=".6"/><path d="M5.2 490.1L8.9 487.1L14.9 493.1Q21 483 27.5 476L28.3 482.6Q21 489 15.6 499Z" fill="#1d4f6b"/><path d="M8.4 512.4L15.9 521.6V528.8Q17.6 530 19.3 528.8V521.6L26.8 512.4z" fill="#e6e6e6" stroke="#777" stroke-width="1.1" stroke-linejoin="round"/><ellipse cx="17.6" cy="512.4" rx="9.2" ry="3.2" fill="#f2f2f2" stroke="#777" stroke-width="1.1"/><path d="M6.8 549.5C6 544 11 540.2 16.5 540.2C19 540.2 19.2 542 18 543.5C17 545 18.5 546.6 21 545.6C24.5 544.2 27.6 545.5 27.6 548.5C27.6 553.5 21.5 556.6 15.5 556.6C10.5 556.6 7.3 553.5 6.8 549.5z" fill="#b4b8dc" stroke="#777" stroke-width=".9"/><circle cx="14.9" cy="542.8" r="1.5" fill="#e02020"/><circle cx="10.4" cy="546.9" r="1.5" fill="#f57900"/><circle cx="10.1" cy="552.3" r="1.5" fill="#2040e0"/><circle cx="13.8" cy="555" r="1.5" fill="#f0e020"/><circle cx="18.9" cy="553" r="1.5" fill="#40b020"/><circle cx="23.1" cy="549.2" r="2" fill="#222"/><circle cx="16" cy="547" r="1.2" fill="#fff"/><g transform="translate(17.6 576.8)"><path d="M0 14.5Q-7.1 5 -7.1 0A7.1 7.1 0 0 1 7.1 0Q7.1 5 0 14.5z" fill="#cc2a2a"/><path d="M-2.8 -2.8L2.8 2.8M2.8 -2.8L-2.8 2.8" stroke="#fff" stroke-width="1.6"/></g><circle cx="1874.9" cy="101.5" r="4.35" fill="none" stroke="#fff" stroke-width="3.5"/><path d="M1880.70 103.39A6.1 6.1 0 0 1 1876.79 107.30L1875.70 103.97A2.6 2.6 0 0 0 1877.37 102.30z" fill="#ee2424"/><path d="M1873.01 107.30A6.1 6.1 0 0 1 1869.10 103.39L1872.43 102.30A2.6 2.6 0 0 0 1874.10 103.97z" fill="#ee2424"/><path d="M1869.10 99.61A6.1 6.1 0 0 1 1873.01 95.70L1874.10 99.03A2.6 2.6 0 0 0 1872.43 100.70z" fill="#ee2424"/><path d="M1876.79 95.70A6.1 6.1 0 0 1 1880.70 99.61L1877.37 100.70A2.6 2.6 0 0 0 1875.70 99.03z" fill="#ee2424"/><g transform="translate(1891.6 101.9)" fill="#7a7a7a"><path d="M-5 -.2L-3.6 -1.1H.6V1.1H-3.6L-5 .2z"/><path d="M.3 -4.2L3 -2.4L5.8 -3.2V3.2L3 2.4L.3 4.2z" stroke="#666" stroke-width=".5"/><path d="M2 -2.4v4.8" stroke="#aaa" stroke-width=".8"/></g><g transform="translate(1909.4 101.9)"><rect x="-5.4" y="-5.3" width="10.8" height="10.6" rx="1.8" fill="#666"/><path d="M-3 -3L3 3M3 -3L-3 3" stroke="#fff" stroke-width="2.3" stroke-linecap="square"/></g><circle cx="1874.9" cy="247.5" r="4.35" fill="none" stroke="#fff" stroke-width="3.5"/><path d="M1880.70 249.39A6.1 6.1 0 0 1 1876.79 253.30L1875.70 249.97A2.6 2.6 0 0 0 1877.37 248.30z" fill="#ee2424"/><path d="M1873.01 253.30A6.1 6.1 0 0 1 1869.10 249.39L1872.43 248.30A2.6 2.6 0 0 0 1874.10 249.97z" fill="#ee2424"/><path d="M1869.10 245.61A6.1 6.1 0 0 1 1873.01 241.70L1874.10 245.03A2.6 2.6 0 0 0 1872.43 246.70z" fill="#ee2424"/><path d="M1876.79 241.70A6.1 6.1 0 0 1 1880.70 245.61L1877.37 246.70A2.6 2.6 0 0 0 1875.70 245.03z" fill="#ee2424"/><g transform="translate(1891.6 247.9)" fill="#7a7a7a"><path d="M-5 -.2L-3.6 -1.1H.6V1.1H-3.6L-5 .2z"/><path d="M.3 -4.2L3 -2.4L5.8 -3.2V3.2L3 2.4L.3 4.2z" stroke="#666" stroke-width=".5"/><path d="M2 -2.4v4.8" stroke="#aaa" stroke-width=".8"/></g><g transform="translate(1909.4 247.9)"><rect x="-5.4" y="-5.3" width="10.8" height="10.6" rx="1.8" fill="#666"/><path d="M-3 -3L3 3M3 -3L-3 3" stroke="#fff" stroke-width="2.3" stroke-linecap="square"/></g><circle cx="1874.9" cy="462.5" r="4.35" fill="none" stroke="#fff" stroke-width="3.5"/><path d="M1880.70 464.39A6.1 6.1 0 0 1 1876.79 468.30L1875.70 464.97A2.6 2.6 0 0 0 1877.37 463.30z" fill="#ee2424"/><path d="M1873.01 468.30A6.1 6.1 0 0 1 1869.10 464.39L1872.43 463.30A2.6 2.6 0 0 0 1874.10 464.97z" fill="#ee2424"/><path d="M1869.10 460.61A6.1 6.1 0 0 1 1873.01 456.70L1874.10 460.03A2.6 2.6 0 0 0 1872.43 461.70z" fill="#ee2424"/><path d="M1876.79 456.70A6.1 6.1 0 0 1 1880.70 460.61L1877.37 461.70A2.6 2.6 0 0 0 1875.70 460.03z" fill="#ee2424"/><g transform="translate(1891.6 462.9)" fill="#7a7a7a"><path d="M-5 -.2L-3.6 -1.1H.6V1.1H-3.6L-5 .2z"/><path d="M.3 -4.2L3 -2.4L5.8 -3.2V3.2L3 2.4L.3 4.2z" stroke="#666" stroke-width=".5"/><path d="M2 -2.4v4.8" stroke="#aaa" stroke-width=".8"/></g><g transform="translate(1909.4 462.9)"><rect x="-5.4" y="-5.3" width="10.8" height="10.6" rx="1.8" fill="#666"/><path d="M-3 -3L3 3M3 -3L-3 3" stroke="#fff" stroke-width="2.3" stroke-linecap="square"/></g><circle cx="1874.9" cy="677.5" r="4.35" fill="none" stroke="#fff" stroke-width="3.5"/><path d="M1880.70 679.39A6.1 6.1 0 0 1 1876.79 683.30L1875.70 679.97A2.6 2.6 0 0 0 1877.37 678.30z" fill="#ee2424"/><path d="M1873.01 683.30A6.1 6.1 0 0 1 1869.10 679.39L1872.43 678.30A2.6 2.6 0 0 0 1874.10 679.97z" fill="#ee2424"/><path d="M1869.10 675.61A6.1 6.1 0 0 1 1873.01 671.70L1874.10 675.03A2.6 2.6 0 0 0 1872.43 676.70z" fill="#ee2424"/><path d="M1876.79 671.70A6.1 6.1 0 0 1 1880.70 675.61L1877.37 676.70A2.6 2.6 0 0 0 1875.70 675.03z" fill="#ee2424"/><g transform="translate(1891.6 677.9)" fill="#7a7a7a"><path d="M-5 -.2L-3.6 -1.1H.6V1.1H-3.6L-5 .2z"/><path d="M.3 -4.2L3 -2.4L5.8 -3.2V3.2L3 2.4L.3 4.2z" stroke="#666" stroke-width=".5"/><path d="M2 -2.4v4.8" stroke="#aaa" stroke-width=".8"/></g><g transform="translate(1909.4 677.9)"><rect x="-5.4" y="-5.3" width="10.8" height="10.6" rx="1.8" fill="#666"/><path d="M-3 -3L3 3M3 -3L-3 3" stroke="#fff" stroke-width="2.3" stroke-linecap="square"/></g><circle cx="1874.9" cy="893.5" r="4.35" fill="none" stroke="#fff" stroke-width="3.5"/><path d="M1880.70 895.39A6.1 6.1 0 0 1 1876.79 899.30L1875.70 895.97A2.6 2.6 0 0 0 1877.37 894.30z" fill="#ee2424"/><path d="M1873.01 899.30A6.1 6.1 0 0 1 1869.10 895.39L1872.43 894.30A2.6 2.6 0 0 0 1874.10 895.97z" fill="#ee2424"/><path d="M1869.10 891.61A6.1 6.1 0 0 1 1873.01 887.70L1874.10 891.03A2.6 2.6 0 0 0 1872.43 892.70z" fill="#ee2424"/><path d="M1876.79 887.70A6.1 6.1 0 0 1 1880.70 891.61L1877.37 892.70A2.6 2.6 0 0 0 1875.70 891.03z" fill="#ee2424"/><g transform="translate(1891.6 893.9)" fill="#7a7a7a"><path d="M-5 -.2L-3.6 -1.1H.6V1.1H-3.6L-5 .2z"/><path d="M.3 -4.2L3 -2.4L5.8 -3.2V3.2L3 2.4L.3 4.2z" stroke="#666" stroke-width=".5"/><path d="M2 -2.4v4.8" stroke="#aaa" stroke-width=".8"/></g><g transform="translate(1909.4 893.9)"><rect x="-5.4" y="-5.3" width="10.8" height="10.6" rx="1.8" fill="#666"/><path d="M-3 -3L3 3M3 -3L-3 3" stroke="#fff" stroke-width="2.3" stroke-linecap="square"/></g><g transform="translate(1608.6 96.2) scale(0.66)"><path d="M4.7 10.4h16.2l-4.4 5.2h-16.4z" fill="#b59a98" stroke="#8a7472" stroke-width="0.5" stroke-linejoin="round"/><path d="M4.7 5.2h16.2l-4.4 5.2h-16.4z" fill="#b59a98" stroke="#8a7472" stroke-width="0.5" stroke-linejoin="round"/><path d="M4.7 0.0h16.2l-4.4 5.2h-16.4z" fill="#b59a98" stroke="#8a7472" stroke-width="0.5" stroke-linejoin="round"/></g><g transform="translate(1608 240) scale(0.72)"><path d="M.4 2.6L7.8 .3L22.6 14.5L14.6 22.6L.4 9z" fill="#f3f0e6" stroke="#9b9b9b" stroke-width="1" stroke-linejoin="round"/><circle cx="4.6" cy="4.9" r="1.6" fill="#c2dcf3" stroke="#999" stroke-width=".7"/><g transform="translate(12.2 12) rotate(44)"><rect x="-5.6" y="-3.4" width="11.2" height="6.8" rx=".8" fill="#3b6ea8"/><path d="M-4 -1.4h8M-4 .9h8" stroke="#8fb2dc" stroke-width=".9"/></g></g><g transform="translate(1610.2 456.5) scale(0.72)"><path d="M15.2 0V14.6H6.3z" fill="#d9a6b8" fill-opacity=".7" stroke="#e8401c" stroke-width="0.9"/><path d="M0 0V14.6" stroke="#e8401c" stroke-width="0.9"/><rect x="-1.4" y="-1.4" width="2.8" height="2.8" fill="#e8401c"/><rect x="-1.4" y="13.2" width="2.8" height="2.8" fill="#e8401c"/><rect x="13.8" y="-1.4" width="2.8" height="2.8" fill="#e8401c"/><rect x="13.8" y="13.2" width="2.8" height="2.8" fill="#e8401c"/><rect x="4.9" y="13.2" width="2.8" height="2.8" fill="#e8401c"/><rect x="4.9" y="4.2" width="2.8" height="2.8" fill="#e8401c"/></g><g transform="translate(1608.4 669.5) scale(0.74)"><path d="M5 5L17.7 2.5M5 5L17.7 11.3M5 5L2.5 17.5M5 5L11.6 17.5" stroke="#111" stroke-width="1.2"/><rect x=".5" y=".5" width="7.6" height="7.2" rx=".6" fill="#fff" stroke="#e2553a" stroke-width="1.5"/><rect x="15.6" y="0.4" width="4.2" height="4.2" rx=".5" fill="#fff" stroke="#e2553a" stroke-width="1.2"/><rect x="15.6" y="9.2" width="4.2" height="4.2" rx=".5" fill="#fff" stroke="#e2553a" stroke-width="1.2"/><rect x="0.4" y="15.4" width="4.2" height="4.2" rx=".5" fill="#fff" stroke="#e2553a" stroke-width="1.2"/><rect x="9.5" y="15.4" width="4.2" height="4.2" rx=".5" fill="#fff" stroke="#e2553a" stroke-width="1.2"/></g><g transform="translate(1608 884.5) scale(0.74)"><ellipse cx="11" cy="21" rx="9" ry="1.5" fill="#000" opacity=".1"/><path d="M7.7 5.6L13.9 .6V3.5C19 3.5 21.6 6.5 21.4 10.4C21.2 13.4 19.4 15.4 17 15.8L15.6 13.7C17 12.8 17.6 11.4 17.2 10.1C16.8 8.9 15.3 8.4 13.9 8.4V11.2Z" fill="#f5d51e" stroke="#e0b800" stroke-width=".6"/><path d="M14.5 16.2L8.3 21.4V18.4C3.2 18.4 .4 15.4 .6 11.5C.8 8.5 2.4 6.6 4.6 6.1L6.2 8.2C5 9.2 4.4 10.5 4.8 11.8C5.2 13 6.9 13.5 8.3 13.5V10.6Z" fill="#73d216" stroke="#4eaa0a" stroke-width=".6"/></g><circle cx="1600.2" cy="121.4" r="5.3" fill="#008000"/><path d="M1597.2 121.6L1599.4 124L1603.4 118.6" stroke="#fff" stroke-width="1.8" fill="none" stroke-linecap="round" stroke-linejoin="round"/><g transform="translate(1650.8 122) scale(1.0)"><path d="M-7.9 0Q0 -8.4 7.9 0Q0 7.4 -7.9 0z" fill="#fff" stroke="#666" stroke-width="1.3"/><circle cx="0" cy="-.3" r="3.3" fill="#5a5af0"/><circle cx="0" cy="-.6" r="1.5" fill="#111"/></g><g transform="translate(1668.2 116) scale(0.73)"><path d="M15.2 0V14.6H6.3z" fill="none" fill-opacity=".7" stroke="#111" stroke-width="1.3"/><path d="M0 0V14.6" stroke="#111" stroke-width="1.3"/><rect x="-1.4" y="-1.4" width="2.8" height="2.8" fill="#e8401c"/><rect x="-1.4" y="13.2" width="2.8" height="2.8" fill="#e8401c"/><rect x="13.8" y="-1.4" width="2.8" height="2.8" fill="#e8401c"/><rect x="13.8" y="13.2" width="2.8" height="2.8" fill="#e8401c"/><rect x="4.9" y="13.2" width="2.8" height="2.8" fill="#e8401c"/><rect x="4.9" y="4.2" width="2.8" height="2.8" fill="#e8401c"/></g><path d="M1623.7 209.3l7 7.6h-3.6v6.4h-6.8v-6.4h-3.6z" fill="#999"/><path d="M1688.5 223.3l7-7.6h-3.6v-6.4h-6.8v6.4h-3.6z" fill="#999"/><g transform="translate(1744.5 209.5) scale(0.78)"><path d="M4.7 10.4h16.2l-4.4 5.2h-16.4z" fill="#9c9c9c" stroke="#9c9c9c" stroke-width="0.3" stroke-linejoin="round"/><path d="M4.7 5.2h16.2l-4.4 5.2h-16.4z" fill="#9c9c9c" stroke="#9c9c9c" stroke-width="0.3" stroke-linejoin="round"/><path d="M4.7 0.0h16.2l-4.4 5.2h-16.4z" fill="#9c9c9c" stroke="#9c9c9c" stroke-width="0.3" stroke-linejoin="round"/></g><circle cx="1759.3" cy="209.8" r="3.7" fill="#a9a9a9"/><path d="M1757.4 209.8l1.4 1.6l2.4-3.2" stroke="#ccc" stroke-width="1" fill="none"/><g transform="translate(1819.5 212.6) scale(1.12)"><path d="M-7.9 0Q0 -8.4 7.9 0Q0 7.4 -7.9 0z" fill="#fff" stroke="#666" stroke-width="1.3"/><circle cx="0" cy="-.3" r="3.3" fill="#5a5af0"/><circle cx="0" cy="-.6" r="1.5" fill="#111"/></g><rect x="1811" y="220.5" width="17.5" height="3" fill="url(#gBar)"/><g transform="translate(1883.7 217) scale(1.0)"><path d="M-6.2 -4.5h12.4l-1.2 12.2q-5 1.6 -10 0z" fill="url(#gTrash)" stroke="#6e6e6e" stroke-width=".8"/><path d="M-3.2 -2.5v9M0 -2.3v9.6M3.2 -2.5v9" stroke="#7a7a7a" stroke-width=".8"/><ellipse cx="0" cy="-5" rx="6.8" ry="2.3" fill="#c4c4c4" stroke="#6e6e6e" stroke-width=".8"/><path d="M-1.8 -7.3Q0 -8.6 1.8 -7.3" stroke="#6e6e6e" stroke-width="1" fill="none"/></g><circle cx="1602.4" cy="280.6" r="4.1" fill="none" stroke="#8f8f8f" stroke-width="1.3"/><path d="M1605.4 283.6L1611.0 289.20000000000005" stroke="#8f8f8f" stroke-width="1.7"/><circle cx="1602" cy="697.5" r="4.1" fill="none" stroke="#8f8f8f" stroke-width="1.3"/><path d="M1605 700.5L1610.6 706.1" stroke="#8f8f8f" stroke-width="1.7"/><path d="M1628.2 421.9h5v6.1h6.1v5h-6.1v6.1h-5v-6.1h-6.1v-5h6.1z" fill="#b9b9b9" stroke="#767676" stroke-width="1" stroke-linejoin="round"/><path d="M1621.2 852.6999999999999h5v6.1h6.1v5h-6.1v6.1h-5v-6.1h-6.1v-5h6.1z" fill="#b9b9b9" stroke="#767676" stroke-width="1" stroke-linejoin="round"/><g transform="translate(1718.4 421)"><rect x=".6" y=".6" width="15.8" height="18.6" rx="1.6" fill="#fafafa" stroke="#8a8a8a" stroke-width="1.1"/><path d="M3.2 5h9M3.2 7.8h8M3.2 10.6h6M3.2 13.4h4.4" stroke="#9a9a9a" stroke-width="1"/><path d="M7 16.6L8 13.2L15.2 5.2L17.4 7.2L10.2 15.2z" fill="#eda33a" stroke="#a86a12" stroke-width=".6"/><path d="M15.2 5.2l.9-1q1.4-.6 2.2 1.1l-.9 1.9z" fill="#e03a3a"/><path d="M7 16.6L8 13.2L10.2 15.2z" fill="#f4d9a8"/></g><g transform="translate(1680.4 851.5)"><rect x=".6" y=".6" width="15.8" height="18.6" rx="1.6" fill="#fafafa" stroke="#8a8a8a" stroke-width="1.1"/><path d="M3.2 5h9M3.2 7.8h8M3.2 10.6h6M3.2 13.4h4.4" stroke="#9a9a9a" stroke-width="1"/><path d="M7 16.6L8 13.2L15.2 5.2L17.4 7.2L10.2 15.2z" fill="#eda33a" stroke="#a86a12" stroke-width=".6"/><path d="M15.2 5.2l.9-1q1.4-.6 2.2 1.1l-.9 1.9z" fill="#e03a3a"/><path d="M7 16.6L8 13.2L10.2 15.2z" fill="#f4d9a8"/></g><g transform="translate(1846.8 431.5) scale(1.0)"><path d="M-6.2 -4.5h12.4l-1.2 12.2q-5 1.6 -10 0z" fill="url(#gTrash)" stroke="#6e6e6e" stroke-width=".8"/><path d="M-3.2 -2.5v9M0 -2.3v9.6M3.2 -2.5v9" stroke="#7a7a7a" stroke-width=".8"/><ellipse cx="0" cy="-5" rx="6.8" ry="2.3" fill="#c4c4c4" stroke="#6e6e6e" stroke-width=".8"/><path d="M-1.8 -7.3Q0 -8.6 1.8 -7.3" stroke="#6e6e6e" stroke-width="1" fill="none"/></g><g transform="translate(1819.1 862) scale(1.0)"><path d="M-6.2 -4.5h12.4l-1.2 12.2q-5 1.6 -10 0z" fill="url(#gTrash)" stroke="#6e6e6e" stroke-width=".8"/><path d="M-3.2 -2.5v9M0 -2.3v9.6M3.2 -2.5v9" stroke="#7a7a7a" stroke-width=".8"/><ellipse cx="0" cy="-5" rx="6.8" ry="2.3" fill="#c4c4c4" stroke="#6e6e6e" stroke-width=".8"/><path d="M-1.8 -7.3Q0 -8.6 1.8 -7.3" stroke="#6e6e6e" stroke-width="1" fill="none"/></g><g transform="translate(1594 476)"><path d="M2.3 5.2Q8 4.6 12.6 2.3M2.3 5.2L7.2 13.2" stroke="#e2553a" stroke-width="1.2" fill="none"/><rect x="0.6" y="3.5" width="3.4" height="3.4" rx=".5" fill="#fff" stroke="#e2553a" stroke-width="1.1"/><rect x="11.1" y="0.6" width="3.4" height="3.4" rx=".5" fill="#fff" stroke="#e2553a" stroke-width="1.1"/><rect x="5.5" y="11.7" width="3.4" height="3.4" rx=".5" fill="#fff" stroke="#e2553a" stroke-width="1.1"/></g><rect x="1622.3999999999999" y="637.5999999999999" width="16.4" height="16.4" fill="none" stroke="#9a9a9a" stroke-width=".8" stroke-dasharray="1 1.2"/><rect x="1621.3" y="636.5" width="2.2" height="2.2" fill="#9a9a9a"/><rect x="1637.7" y="636.5" width="2.2" height="2.2" fill="#9a9a9a"/><rect x="1621.3" y="652.9" width="2.2" height="2.2" fill="#9a9a9a"/><rect x="1637.7" y="652.9" width="2.2" height="2.2" fill="#9a9a9a"/><path d="M1629.3999999999999 644.3v10l2.5-2.4l1.8 3.9l1.7-.8l-1.8-3.8h3.4z" fill="#bdbdbd" stroke="#9a9a9a" stroke-width=".9" stroke-linejoin="round"/><rect x="1874.6" y="853.0999999999999" width="16.4" height="16.4" fill="none" stroke="#111" stroke-width=".8" stroke-dasharray="1 1.2"/><rect x="1873.5" y="852.0" width="2.2" height="2.2" fill="#111"/><rect x="1889.9" y="852.0" width="2.2" height="2.2" fill="#111"/><rect x="1873.5" y="868.4" width="2.2" height="2.2" fill="#111"/><rect x="1889.9" y="868.4" width="2.2" height="2.2" fill="#111"/><path d="M1881.6 859.8v10l2.5-2.4l1.8 3.9l1.7-.8l-1.8-3.8h3.4z" fill="#fff" stroke="#111" stroke-width=".9" stroke-linejoin="round"/><rect x="1622.2" y="997.3" width="16.4" height="16.4" fill="none" stroke="#111" stroke-width=".8" stroke-dasharray="1 1.2"/><rect x="1621.1" y="996.2" width="2.2" height="2.2" fill="#111"/><rect x="1637.5" y="996.2" width="2.2" height="2.2" fill="#111"/><rect x="1621.1" y="1012.6" width="2.2" height="2.2" fill="#111"/><rect x="1637.5" y="1012.6" width="2.2" height="2.2" fill="#111"/><path d="M1629.2 1004.0v10l2.5-2.4l1.8 3.9l1.7-.8l-1.8-3.8h3.4z" fill="#fff" stroke="#111" stroke-width=".9" stroke-linejoin="round"/><g transform="translate(1737.5 644.5) scale(.82)"><path d="M5.5 6L11.6 12.4" stroke="#5c5c5c" stroke-width="2.8" stroke-linecap="round"/><circle cx="0" cy="0" r="8.4" fill="url(#gLens)" stroke="#aeaeae" stroke-width="1.8"/><circle cx="0" cy="0" r="9.2" fill="none" stroke="#8a8a8a" stroke-width=".5"/></g><g transform="translate(1832.3 646)" fill="none" stroke="#2a5ea0"><path d="M-6.2 -4.4A7.6 7.6 0 1 1 -6.6 3.8" stroke-width="1.9"/><path d="M-9.6 -6.6L-8.8 -1.2L-3.6 -3z" fill="#2a5ea0" stroke="none"/><path d="M0 -4.2V.6H3.6" stroke-width="1.7"/></g><g transform="translate(1594.2 715) scale(0.74)"><path d="M5 5L17.7 2.5M5 5L17.7 11.3M5 5L2.5 17.5M5 5L11.6 17.5" stroke="#111" stroke-width="1.2"/><rect x=".5" y=".5" width="7.6" height="7.2" rx=".6" fill="#fff" stroke="#e2553a" stroke-width="1.5"/><rect x="15.6" y="0.4" width="4.2" height="4.2" rx=".5" fill="#fff" stroke="#e2553a" stroke-width="1.2"/><rect x="15.6" y="9.2" width="4.2" height="4.2" rx=".5" fill="#fff" stroke="#e2553a" stroke-width="1.2"/><rect x="0.4" y="15.4" width="4.2" height="4.2" rx=".5" fill="#fff" stroke="#e2553a" stroke-width="1.2"/><rect x="9.5" y="15.4" width="4.2" height="4.2" rx=".5" fill="#fff" stroke="#e2553a" stroke-width="1.2"/></g><g transform="translate(1594.2 735) scale(0.74)"><path d="M5 5L17.7 2.5M5 5L17.7 11.3M5 5L2.5 17.5M5 5L11.6 17.5" stroke="#111" stroke-width="1.2"/><rect x=".5" y=".5" width="7.6" height="7.2" rx=".6" fill="#fff" stroke="#e2553a" stroke-width="1.5"/><rect x="15.6" y="0.4" width="4.2" height="4.2" rx=".5" fill="#fff" stroke="#e2553a" stroke-width="1.2"/><rect x="15.6" y="9.2" width="4.2" height="4.2" rx=".5" fill="#fff" stroke="#e2553a" stroke-width="1.2"/><rect x="0.4" y="15.4" width="4.2" height="4.2" rx=".5" fill="#fff" stroke="#e2553a" stroke-width="1.2"/><rect x="9.5" y="15.4" width="4.2" height="4.2" rx=".5" fill="#fff" stroke="#e2553a" stroke-width="1.2"/></g><g transform="translate(1594.2 755) scale(0.74)"><path d="M5 5L17.7 2.5M5 5L17.7 11.3M5 5L2.5 17.5M5 5L11.6 17.5" stroke="#111" stroke-width="1.2"/><rect x=".5" y=".5" width="7.6" height="7.2" rx=".6" fill="#fff" stroke="#e2553a" stroke-width="1.5"/><rect x="15.6" y="0.4" width="4.2" height="4.2" rx=".5" fill="#fff" stroke="#e2553a" stroke-width="1.2"/><rect x="15.6" y="9.2" width="4.2" height="4.2" rx=".5" fill="#fff" stroke="#e2553a" stroke-width="1.2"/><rect x="0.4" y="15.4" width="4.2" height="4.2" rx=".5" fill="#fff" stroke="#e2553a" stroke-width="1.2"/><rect x="9.5" y="15.4" width="4.2" height="4.2" rx=".5" fill="#fff" stroke="#e2553a" stroke-width="1.2"/></g><g transform="translate(1594.2 775) scale(0.74)"><path d="M5 5L17.7 2.5M5 5L17.7 11.3M5 5L2.5 17.5M5 5L11.6 17.5" stroke="#111" stroke-width="1.2"/><rect x=".5" y=".5" width="7.6" height="7.2" rx=".6" fill="#fff" stroke="#e2553a" stroke-width="1.5"/><rect x="15.6" y="0.4" width="4.2" height="4.2" rx=".5" fill="#fff" stroke="#e2553a" stroke-width="1.2"/><rect x="15.6" y="9.2" width="4.2" height="4.2" rx=".5" fill="#fff" stroke="#e2553a" stroke-width="1.2"/><rect x="0.4" y="15.4" width="4.2" height="4.2" rx=".5" fill="#fff" stroke="#e2553a" stroke-width="1.2"/><rect x="9.5" y="15.4" width="4.2" height="4.2" rx=".5" fill="#fff" stroke="#e2553a" stroke-width="1.2"/></g><g transform="translate(1594.2 795) scale(0.74)"><path d="M5 5L17.7 2.5M5 5L17.7 11.3M5 5L2.5 17.5M5 5L11.6 17.5" stroke="#111" stroke-width="1.2"/><rect x=".5" y=".5" width="7.6" height="7.2" rx=".6" fill="#fff" stroke="#e2553a" stroke-width="1.5"/><rect x="15.6" y="0.4" width="4.2" height="4.2" rx=".5" fill="#fff" stroke="#e2553a" stroke-width="1.2"/><rect x="15.6" y="9.2" width="4.2" height="4.2" rx=".5" fill="#fff" stroke="#e2553a" stroke-width="1.2"/><rect x="0.4" y="15.4" width="4.2" height="4.2" rx=".5" fill="#fff" stroke="#e2553a" stroke-width="1.2"/><rect x="9.5" y="15.4" width="4.2" height="4.2" rx=".5" fill="#fff" stroke="#e2553a" stroke-width="1.2"/></g><g clip-path="url(#crl)"><g transform="translate(1594.2 815) scale(0.74)"><path d="M5 5L17.7 2.5M5 5L17.7 11.3M5 5L2.5 17.5M5 5L11.6 17.5" stroke="#111" stroke-width="1.2"/><rect x=".5" y=".5" width="7.6" height="7.2" rx=".6" fill="#fff" stroke="#e2553a" stroke-width="1.5"/><rect x="15.6" y="0.4" width="4.2" height="4.2" rx=".5" fill="#fff" stroke="#e2553a" stroke-width="1.2"/><rect x="15.6" y="9.2" width="4.2" height="4.2" rx=".5" fill="#fff" stroke="#e2553a" stroke-width="1.2"/><rect x="0.4" y="15.4" width="4.2" height="4.2" rx=".5" fill="#fff" stroke="#e2553a" stroke-width="1.2"/><rect x="9.5" y="15.4" width="4.2" height="4.2" rx=".5" fill="#fff" stroke="#e2553a" stroke-width="1.2"/></g></g><g transform="translate(1744 851.5)"><rect x="3.5" y=".8" width="10" height="10" rx="1" fill="#f4f4f4" stroke="#b0b0b0" stroke-width=".9"/><rect x="8.8" y="6" width="10.4" height="10.4" rx="1" fill="#fdfdfd" stroke="#b0b0b0" stroke-width=".9"/><path d="M5.4 18L.6 12.6L5.4 7.4V10.3Q10.6 9.6 11 4.2Q13.6 8.6 11.6 12.3Q9.8 15.3 5.4 15.2z" fill="#3465a4" stroke="#204a87" stroke-width=".5"/></g><rect x="1597.5" y="913.5" width="8" height="8" fill="#fff" stroke="#919191" stroke-width="1"/><path d="M1599.3 917.5h4.4M1601.5 915.3v4.4" stroke="#2d4d9e" stroke-width="1.1"/><path d="M1607 917.5h4" stroke="#999" stroke-width="1" stroke-dasharray="1 1"/><rect x="1614.5" y="911" width="12.5" height="2.8" rx="1.2" fill="#b5b5b5" stroke="#6e6e6e" stroke-width=".7"/><rect x="1614.5" y="915.6" width="12.5" height="2.8" rx="1.2" fill="#b5b5b5" stroke="#6e6e6e" stroke-width=".7"/><rect x="1614.5" y="920.2" width="12.5" height="2.8" rx="1.2" fill="#b5b5b5" stroke="#6e6e6e" stroke-width=".7"/><g transform="translate(1728.3 996) scale(.8)"><path d="M2.6 9L11.7 1.9V5.6C17.2 5.6 20.6 9 20.6 13.5C20.6 17.5 18.6 20.5 15.6 21.6L13.3 19.4C15 18 15.6 16.3 15 14.8C14.4 13.4 13 12.9 11.7 12.9V16.8Z" fill="#a6a6a6"/></g><g transform="translate(1856.7 996) scale(-.8 .8)"><path d="M2.6 9L11.7 1.9V5.6C17.2 5.6 20.6 9 20.6 13.5C20.6 17.5 18.6 20.5 15.6 21.6L13.3 19.4C15 18 15.6 16.3 15 14.8C14.4 13.4 13 12.9 11.7 12.9V16.8Z" fill="#66d813" stroke="#4fc008" stroke-width=".6"/></g><g transform="translate(4.6 12.8)"><rect x=".3" y=".8" width="10.6" height="11" rx="1" fill="#ffd23e"/><path d="M.5 1.5Q3 .3 5 1.3L4.6 2.6Q2.6 2 .5 2.8z" fill="#58c832"/><rect x=".6" y="3.2" width="1.3" height="4.2" fill="#e07898"/><path d="M5.6 .8Q5.4 3.6 7.4 5.4L10.4 11.6L8 11.8Q7.4 8 5.2 6.2Q4.6 3 5.6 .8zM1 10.6Q5 9.4 9 11.8H1z" fill="#5b86e0"/><rect x="2.8" y="5" width="1.6" height="2.2" fill="#4a9a6a"/><path d="M11.2 .2L12.8 1.4L6.6 7.6L5.6 7.9L5.9 6.8z" fill="#a0561a"/></g><circle cx="11.4" cy="1035.3" r="8.4" fill="none" stroke="#111" stroke-width="1.1"/><path d="M3 1035.3h16.8" stroke="#ff3b1f" stroke-width="2"/><circle cx="135.9" cy="1035.3" r="8.4" fill="none" stroke="#111" stroke-width="1.1"/><path d="M135.9 1026.9v16.8" stroke="#ff3b1f" stroke-width="2"/><circle cx="267.6" cy="1035.3" r="8.4" fill="none" stroke="#111" stroke-width="1.1"/><path d="M268 1035L275.5 1027.7" stroke="#ff3b1f" stroke-width="2"/><path d="M343.6 1041H360L354.8 1028.6z" fill="none" stroke="#111" stroke-width="1.6" stroke-linejoin="miter"/><path d="M355.6 1029.8Q359.6 1034.6 360.2 1040.6" stroke="#ff3b1f" stroke-width="1.4" fill="none"/><path d="M426.5 1035.5h17.5v5.5h-17.5z" fill="#e8e8e8" stroke="#222" stroke-width="1.1"/><path d="M429.5 1038v3M432.5 1038v3M435.5 1038v3M438.5 1038v3M441.5 1038v3" stroke="#222" stroke-width=".8"/><path d="M538 1029.5h11" stroke="#e2553a" stroke-width="1.3"/><rect x="535.8" y="1027.7" width="3.6" height="3.6" rx=".5" fill="#fff" stroke="#e2553a" stroke-width="1.1"/><rect x="547.6" y="1027.7" width="3.6" height="3.6" rx=".5" fill="#fff" stroke="#e2553a" stroke-width="1.1"/><path d="M542 1030v11l2.6-2.5l1.9 4l1.7-.8l-1.9-3.9h3.5z" fill="#fff" stroke="#111" stroke-width=".9" stroke-linejoin="round"/></svg>
<div class="t ui" style="left:1740px;top:1011px;height:24px;line-height:24px;font-size:19px;color:rgba(255,255,255,.92);text-shadow:1px 1px 1px rgba(60,60,60,.75),0 0 1px rgba(90,90,90,.8);z-index:5">CSDN @往来如白丁</div>
</body></html>
